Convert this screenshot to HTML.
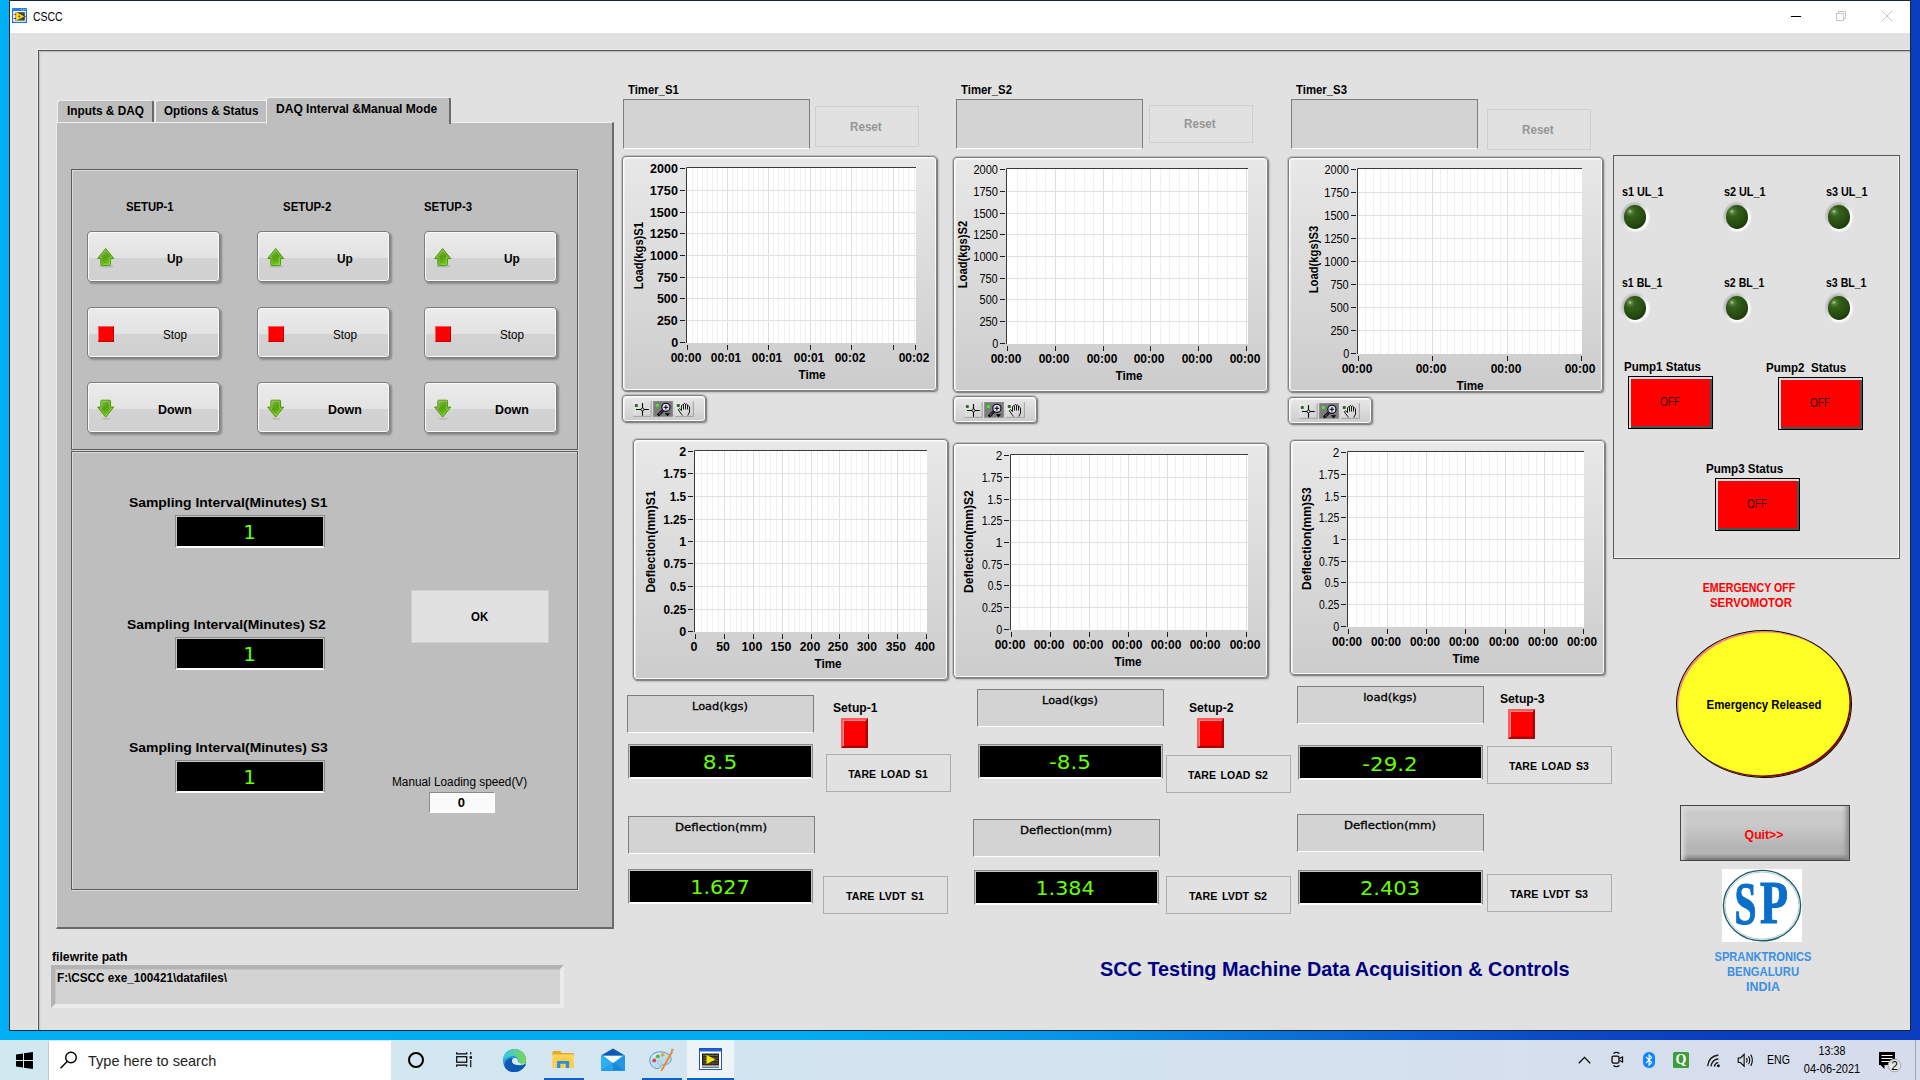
<!DOCTYPE html>
<html lang="en"><head><meta charset="utf-8"><title>CSCC</title>
<style>
html,body{margin:0;padding:0;width:1920px;height:1080px;overflow:hidden}
body{position:relative;background:linear-gradient(90deg,#00b0f7 0%,#00acf4 42%,#0596e8 55%,#0a6ed4 68%,#0a4cc6 80%,#0a3ec0 90%,#0a3cbe 100%);font-family:"Liberation Sans",sans-serif;font-size:13px;color:#000}
.a{position:absolute;box-sizing:border-box}
.t{margin:0;padding:0;white-space:pre}
.etch{border:1px solid #5c5c5c;box-shadow:1px 1px 0 #dadada,inset 1px 1px 0 #dadada}
.btn{border:1px solid #7c7c7c;border-radius:4px;background:linear-gradient(180deg,#ebebeb 0%,#e3e3e3 52%,#d3d3d3 54%,#d0d0d0 100%);box-shadow:inset 0 0 0 1px #fafafa,2px 2px 2px rgba(0,0,0,.28)}
.cf{border:1px solid #808080;border-radius:4px;background:linear-gradient(180deg,#e8e8e8 0%,#dcdcdc 45%,#cccccc 100%);box-shadow:inset 0 0 0 1px #fbfbfb,inset 2px 2px 0 0 rgba(251,251,251,.55),0 0 0 1px rgba(120,120,120,.35),1px 1px 1px rgba(0,0,0,.32),2px 2px 2px rgba(0,0,0,.12)}
.lbl{background:#d3d3d3;border:1px solid #7e7e7e;border-bottom-color:#fdfdfd}
.dsp{background:#000;border:1px solid #8a8a8a;border-bottom-color:#fff;box-shadow:inset 1px 1px 0 #c6c6c6,inset -1px 0 0 #c6c6c6,inset 0 -1px 0 #fff}
.flat{background:#e1e1e1;border:1px solid #adadad}
.flatd{background:#e1e1e1;border:1px solid #cfcfcf}
</style></head><body>

<div class="a" style="left:9px;top:0px;width:1902px;height:1031px;background:#1c2632"></div>
<div class="a" style="left:10px;top:1px;width:1900px;height:32px;background:#fff"></div>
<div class="a" style="left:10px;top:33px;width:1900px;height:997px;background:#e1e1e1"></div>
<div class="a" style="left:37px;top:49px;width:1873px;height:981px;border-left:1px solid #ebebeb;border-top:1px solid #ebebeb"></div>
<div class="a" style="left:38px;top:50px;width:1872px;height:980px;border-left:1px solid #565656;border-top:1px solid #565656;box-shadow:inset 1px 1px 0 #c4c4c4,inset 2px 2px 0 #d9d9d9"></div>
<svg class="a" style="left:12px;top:8px" width="15" height="15" viewBox="0 0 15 15">
<path d="M0 1.2Q0 0.2 1 0.2H14Q15 0.2 15 1.2V15H0Z" fill="#1572e4"/><rect x="0" y="0.2" width="15" height="2.6" fill="#1a80ee"/>
<circle cx="9.4" cy="1.6" r="0.65" fill="#f6d23c"/><circle cx="11.4" cy="1.6" r="0.65" fill="#f6d23c"/><circle cx="13.3" cy="1.6" r="0.65" fill="#f4a6a6"/>
<rect x="1.2" y="3" width="12.6" height="10.8" fill="#fff"/>
<rect x="3.2" y="4.2" width="9.6" height="8.4" fill="#3c3c3c"/>
<rect x="3.2" y="4.2" width="1.8" height="8.4" fill="#e6b414"/>
<polygon points="4.4,4.2 12.4,8.4 4.4,12.6" fill="#f8da14"/>
<path d="M7.3 7L8 8.4L7.3 9.8L6.6 8.4Z M5.9 8.4L7.3 7.9L8.7 8.4L7.3 8.9Z" fill="#2a2a2a"/>
<rect x="10" y="5" width="1.2" height="1.2" fill="#0a8a0a"/><rect x="8.6" y="11" width="1.2" height="1.2" fill="#0a8a0a"/>
<rect x="1.9" y="6" width="1.9" height="0.9" fill="#f00"/><rect x="11.9" y="8" width="1.9" height="0.9" fill="#f00"/><rect x="1.9" y="10" width="1.9" height="0.9" fill="#00f"/>
</svg>
<div class="a t" style="top:10.99px;font-size:12.5px;line-height:12.5px;font-weight:normal;color:#000;left:33.48px;transform-origin:0 50%;transform:scaleX(0.8380);">CSCC</div>
<div class="a" style="left:1791px;top:16px;width:10px;height:1px;background:#000"></div>
<svg class="a" style="left:1835px;top:10px" width="12" height="12" viewBox="0 0 12 12" fill="none" stroke="#c6c6c6" stroke-width="1">
<rect x="1.5" y="3.5" width="7" height="7"/><path d="M3.5 3.5V1.5H10.5V8.5H8.5"/></svg>
<svg class="a" style="left:1881px;top:10px" width="12" height="12" viewBox="0 0 12 12" stroke="#c4c4c4" stroke-width="1"><path d="M1 1L11 11M11 1L1 11"/></svg>
<div class="a" style="left:56px;top:122px;width:558px;height:807px;background:#bebebe;border-top:1px solid #eeeeee;border-left:1px solid #eeeeee;border-right:2px solid #6a6a6a;border-bottom:2px solid #6a6a6a"></div>
<div class="a" style="left:57px;top:100px;width:97px;height:22px;background:#bebebe;border-top:1px solid #eeeeee;border-left:1px solid #eeeeee;border-right:2px solid #6a6a6a;border-radius:3px 3px 0 0"></div>
<div class="a" style="left:155px;top:100px;width:112px;height:22px;background:#bebebe;border-top:1px solid #eeeeee;border-left:1px solid #eeeeee;border-right:2px solid #6a6a6a;border-radius:3px 3px 0 0;border-right:none"></div>
<div class="a" style="left:266px;top:97px;width:185px;height:27px;background:#bebebe;border-top:1px solid #eeeeee;border-left:1px solid #eeeeee;border-right:2px solid #6a6a6a;border-radius:3px 3px 0 0"></div>
<div class="a t" style="top:103.94px;font-size:13px;line-height:13px;font-weight:bold;color:#000;left:67.02px;transform-origin:0 50%;transform:scaleX(0.9117);">Inputs &amp; DAQ</div>
<div class="a t" style="top:103.94px;font-size:13px;line-height:13px;font-weight:bold;color:#000;left:163.95px;transform-origin:0 50%;transform:scaleX(0.8947);">Options &amp; Status</div>
<div class="a t" style="top:101.94px;font-size:13px;line-height:13px;font-weight:bold;color:#000;left:275.71px;transform-origin:0 50%;transform:scaleX(0.9260);">DAQ Interval &amp;Manual Mode</div>
<div class="a etch" style="left:71px;top:169px;width:507px;height:281px;"></div>
<div class="a etch" style="left:71px;top:451px;width:507px;height:439px;"></div>
<div class="a t" style="top:199.94px;font-size:13px;line-height:13px;font-weight:bold;color:#000;left:125.67px;transform-origin:0 50%;transform:scaleX(0.8667);">SETUP-1</div>
<div class="a t" style="top:199.94px;font-size:13px;line-height:13px;font-weight:bold;color:#000;left:282.66px;transform-origin:0 50%;transform:scaleX(0.8796);">SETUP-2</div>
<div class="a t" style="top:199.94px;font-size:13px;line-height:13px;font-weight:bold;color:#000;left:423.66px;transform-origin:0 50%;transform:scaleX(0.8741);">SETUP-3</div>
<div class="a btn" style="left:87px;top:231px;width:133px;height:51px"><svg class="a" style="left:7.75px;top:15.1px" width="19.4" height="20.6" viewBox="0 0 20 20.6" preserveAspectRatio="none"><defs><linearGradient id="g1" x1="0.2" y1="0" x2="0.8" y2="1"><stop offset="0" stop-color="#86bf4a"/><stop offset="0.5" stop-color="#57a10e"/><stop offset="1" stop-color="#74d616"/></linearGradient></defs><ellipse cx="10.5" cy="19.4" rx="7.5" ry="1.1" fill="rgba(0,0,0,.13)"/><path d="M10 1.5L18.3 11.5H15V17.5Q15 18.4 14.1 18.4H5.9Q5 18.4 5 17.5V11.5H1.7Z" fill="url(#g1)" stroke="#4e9a06" stroke-width="1" stroke-linejoin="round"/><path d="M10 3.1L16 10.4H13.9V17.3H6.1V10.4H4Z" fill="none" stroke="rgba(255,255,255,.28)" stroke-width="0.9"/></svg></div>
<div class="a t" style="top:251.94px;font-size:13px;line-height:13px;font-weight:bold;color:#000;left:167.02px;transform-origin:0 50%;transform:scaleX(0.9125);">Up</div>
<div class="a btn" style="left:87px;top:307px;width:133px;height:51px"><div class="a" style="left:10px;top:18px;width:16px;height:16px;background:#ff0000;border:1px solid;border-color:#ff5a5a #c40000 #c40000 #ff5a5a"></div></div>
<div class="a t" style="top:327.94px;font-size:13px;line-height:13px;font-weight:normal;color:#000;left:162.73px;transform-origin:0 50%;transform:scaleX(0.8980);">Stop</div>
<div class="a btn" style="left:87px;top:382px;width:133px;height:51px"><svg class="a" style="left:7.75px;top:16.2px" width="19.4" height="20.6" viewBox="0 0 20 20.6" preserveAspectRatio="none"><defs><linearGradient id="g3" x1="0.2" y1="0" x2="0.8" y2="1"><stop offset="0" stop-color="#86bf4a"/><stop offset="0.45" stop-color="#57a10e"/><stop offset="1" stop-color="#74d616"/></linearGradient></defs><ellipse cx="10.5" cy="19.8" rx="5" ry="0.8" fill="rgba(0,0,0,.13)"/><path d="M10 18.1L18.3 8.1H15V2.1Q15 1.2 14.1 1.2H5.9Q5 1.2 5 2.1V8.1H1.7Z" fill="url(#g3)" stroke="#4e9a06" stroke-width="1" stroke-linejoin="round"/><path d="M10 16.5L16 9.2H13.9V2.3H6.1V9.2H4Z" fill="none" stroke="rgba(255,255,255,.28)" stroke-width="0.9"/></svg></div>
<div class="a t" style="top:402.94px;font-size:13px;line-height:13px;font-weight:bold;color:#000;left:157.68px;transform-origin:0 50%;transform:scaleX(0.9541);">Down</div>
<div class="a btn" style="left:257px;top:231px;width:133px;height:51px"><svg class="a" style="left:7.75px;top:15.1px" width="19.4" height="20.6" viewBox="0 0 20 20.6" preserveAspectRatio="none"><defs><linearGradient id="g4" x1="0.2" y1="0" x2="0.8" y2="1"><stop offset="0" stop-color="#86bf4a"/><stop offset="0.5" stop-color="#57a10e"/><stop offset="1" stop-color="#74d616"/></linearGradient></defs><ellipse cx="10.5" cy="19.4" rx="7.5" ry="1.1" fill="rgba(0,0,0,.13)"/><path d="M10 1.5L18.3 11.5H15V17.5Q15 18.4 14.1 18.4H5.9Q5 18.4 5 17.5V11.5H1.7Z" fill="url(#g4)" stroke="#4e9a06" stroke-width="1" stroke-linejoin="round"/><path d="M10 3.1L16 10.4H13.9V17.3H6.1V10.4H4Z" fill="none" stroke="rgba(255,255,255,.28)" stroke-width="0.9"/></svg></div>
<div class="a t" style="top:251.94px;font-size:13px;line-height:13px;font-weight:bold;color:#000;left:337.02px;transform-origin:0 50%;transform:scaleX(0.9125);">Up</div>
<div class="a btn" style="left:257px;top:307px;width:133px;height:51px"><div class="a" style="left:10px;top:18px;width:16px;height:16px;background:#ff0000;border:1px solid;border-color:#ff5a5a #c40000 #c40000 #ff5a5a"></div></div>
<div class="a t" style="top:327.94px;font-size:13px;line-height:13px;font-weight:normal;color:#000;left:332.73px;transform-origin:0 50%;transform:scaleX(0.8980);">Stop</div>
<div class="a btn" style="left:257px;top:382px;width:133px;height:51px"><svg class="a" style="left:7.75px;top:16.2px" width="19.4" height="20.6" viewBox="0 0 20 20.6" preserveAspectRatio="none"><defs><linearGradient id="g6" x1="0.2" y1="0" x2="0.8" y2="1"><stop offset="0" stop-color="#86bf4a"/><stop offset="0.45" stop-color="#57a10e"/><stop offset="1" stop-color="#74d616"/></linearGradient></defs><ellipse cx="10.5" cy="19.8" rx="5" ry="0.8" fill="rgba(0,0,0,.13)"/><path d="M10 18.1L18.3 8.1H15V2.1Q15 1.2 14.1 1.2H5.9Q5 1.2 5 2.1V8.1H1.7Z" fill="url(#g6)" stroke="#4e9a06" stroke-width="1" stroke-linejoin="round"/><path d="M10 16.5L16 9.2H13.9V2.3H6.1V9.2H4Z" fill="none" stroke="rgba(255,255,255,.28)" stroke-width="0.9"/></svg></div>
<div class="a t" style="top:402.94px;font-size:13px;line-height:13px;font-weight:bold;color:#000;left:327.68px;transform-origin:0 50%;transform:scaleX(0.9541);">Down</div>
<div class="a btn" style="left:424px;top:231px;width:133px;height:51px"><svg class="a" style="left:7.75px;top:15.1px" width="19.4" height="20.6" viewBox="0 0 20 20.6" preserveAspectRatio="none"><defs><linearGradient id="g7" x1="0.2" y1="0" x2="0.8" y2="1"><stop offset="0" stop-color="#86bf4a"/><stop offset="0.5" stop-color="#57a10e"/><stop offset="1" stop-color="#74d616"/></linearGradient></defs><ellipse cx="10.5" cy="19.4" rx="7.5" ry="1.1" fill="rgba(0,0,0,.13)"/><path d="M10 1.5L18.3 11.5H15V17.5Q15 18.4 14.1 18.4H5.9Q5 18.4 5 17.5V11.5H1.7Z" fill="url(#g7)" stroke="#4e9a06" stroke-width="1" stroke-linejoin="round"/><path d="M10 3.1L16 10.4H13.9V17.3H6.1V10.4H4Z" fill="none" stroke="rgba(255,255,255,.28)" stroke-width="0.9"/></svg></div>
<div class="a t" style="top:251.94px;font-size:13px;line-height:13px;font-weight:bold;color:#000;left:504.02px;transform-origin:0 50%;transform:scaleX(0.9125);">Up</div>
<div class="a btn" style="left:424px;top:307px;width:133px;height:51px"><div class="a" style="left:10px;top:18px;width:16px;height:16px;background:#ff0000;border:1px solid;border-color:#ff5a5a #c40000 #c40000 #ff5a5a"></div></div>
<div class="a t" style="top:327.94px;font-size:13px;line-height:13px;font-weight:normal;color:#000;left:499.73px;transform-origin:0 50%;transform:scaleX(0.8980);">Stop</div>
<div class="a btn" style="left:424px;top:382px;width:133px;height:51px"><svg class="a" style="left:7.75px;top:16.2px" width="19.4" height="20.6" viewBox="0 0 20 20.6" preserveAspectRatio="none"><defs><linearGradient id="g9" x1="0.2" y1="0" x2="0.8" y2="1"><stop offset="0" stop-color="#86bf4a"/><stop offset="0.45" stop-color="#57a10e"/><stop offset="1" stop-color="#74d616"/></linearGradient></defs><ellipse cx="10.5" cy="19.8" rx="5" ry="0.8" fill="rgba(0,0,0,.13)"/><path d="M10 18.1L18.3 8.1H15V2.1Q15 1.2 14.1 1.2H5.9Q5 1.2 5 2.1V8.1H1.7Z" fill="url(#g9)" stroke="#4e9a06" stroke-width="1" stroke-linejoin="round"/><path d="M10 16.5L16 9.2H13.9V2.3H6.1V9.2H4Z" fill="none" stroke="rgba(255,255,255,.28)" stroke-width="0.9"/></svg></div>
<div class="a t" style="top:402.94px;font-size:13px;line-height:13px;font-weight:bold;color:#000;left:494.68px;transform-origin:0 50%;transform:scaleX(0.9541);">Down</div>
<div class="a t" style="top:496.18px;font-size:13.5px;line-height:13.5px;font-weight:bold;color:#000;left:128.89px;transform-origin:0 50%;transform:scaleX(1.0297);">Sampling Interval(Minutes) S1</div>
<div class="a dsp" style="left:175px;top:515px;width:150px;height:33px;"></div>
<div class="a t" style="top:521.60px;font-size:20px;line-height:20px;font-weight:normal;color:#66ff00;font-family:&quot;DejaVu Sans&quot;,sans-serif;left:249.54px;transform:translateX(-50%) scaleX(1.0000);">1</div>
<div class="a t" style="top:618.18px;font-size:13.5px;line-height:13.5px;font-weight:bold;color:#000;left:126.88px;transform-origin:0 50%;transform:scaleX(1.0310);">Sampling Interval(Minutes) S2</div>
<div class="a dsp" style="left:175px;top:637px;width:150px;height:33px;"></div>
<div class="a t" style="top:643.60px;font-size:20px;line-height:20px;font-weight:normal;color:#66ff00;font-family:&quot;DejaVu Sans&quot;,sans-serif;left:249.54px;transform:translateX(-50%) scaleX(1.0000);">1</div>
<div class="a t" style="top:741.18px;font-size:13.5px;line-height:13.5px;font-weight:bold;color:#000;left:128.88px;transform-origin:0 50%;transform:scaleX(1.0310);">Sampling Interval(Minutes) S3</div>
<div class="a dsp" style="left:175px;top:760px;width:150px;height:33px;"></div>
<div class="a t" style="top:766.60px;font-size:20px;line-height:20px;font-weight:normal;color:#66ff00;font-family:&quot;DejaVu Sans&quot;,sans-serif;left:249.54px;transform:translateX(-50%) scaleX(1.0000);">1</div>
<div class="a" style="left:411px;top:590px;width:138px;height:53px;background:#e1e1e1;border:1px solid #d0d0d0"></div>
<div class="a t" style="top:609.93px;font-size:13px;line-height:13px;font-weight:bold;color:#000;left:470.96px;transform-origin:0 50%;transform:scaleX(0.8800);">OK</div>
<div class="a t" style="top:775.69px;font-size:12.5px;line-height:12.5px;font-weight:normal;color:#000;left:391.76px;transform-origin:0 50%;transform:scaleX(0.9442);">Manual Loading speed(V)</div>
<div class="a" style="left:429px;top:792px;width:66px;height:21px;background:#fafafa;border:1px solid;border-color:#8a8a8a #fff #fff #8a8a8a"></div>
<div class="a t" style="top:795.93px;font-size:13px;line-height:13px;font-weight:bold;color:#000;left:461.29px;transform:translateX(-50%) scaleX(1.0000);">0</div>
<div class="a t" style="top:949.73px;font-size:13px;line-height:13px;font-weight:bold;color:#000;left:52.46px;transform-origin:0 50%;transform:scaleX(0.9413);">filewrite path</div>
<div class="a" style="left:51px;top:965px;width:513px;height:43px;background:#d3d3d3;border:4px solid;border-color:#b4b4b4 #ececec #ececec #b4b4b4;box-shadow:inset 1px 1px 0 #c6c6c6"></div>
<div class="a t" style="top:971.03px;font-size:13px;line-height:13px;font-weight:bold;color:#000;left:57.02px;transform-origin:0 50%;transform:scaleX(0.9012);">F:\CSCC exe_100421\datafiles\</div>
<div class="a t" style="top:82.94px;font-size:13px;line-height:13px;font-weight:bold;color:#000;left:627.70px;transform-origin:0 50%;transform:scaleX(0.8707);">Timer_S1</div>
<div class="a lbl" style="left:623px;top:99px;width:187px;height:50px;"></div>
<div class="a flatd" style="left:815px;top:106px;width:104px;height:41px;"></div>
<div class="a t" style="top:119.94px;font-size:13px;line-height:13px;font-weight:bold;color:#969696;left:850.13px;transform-origin:0 50%;transform:scaleX(0.8957);">Reset</div>
<div class="a t" style="top:82.94px;font-size:13px;line-height:13px;font-weight:bold;color:#000;left:960.60px;transform-origin:0 50%;transform:scaleX(0.8745);">Timer_S2</div>
<div class="a lbl" style="left:956px;top:99px;width:187px;height:50px;"></div>
<div class="a flatd" style="left:1149px;top:105px;width:104px;height:38px;"></div>
<div class="a t" style="top:117.44px;font-size:13px;line-height:13px;font-weight:bold;color:#969696;left:1184.13px;transform-origin:0 50%;transform:scaleX(0.8957);">Reset</div>
<div class="a t" style="top:82.94px;font-size:13px;line-height:13px;font-weight:bold;color:#000;left:1295.60px;transform-origin:0 50%;transform:scaleX(0.8745);">Timer_S3</div>
<div class="a lbl" style="left:1291px;top:99px;width:187px;height:50px;"></div>
<div class="a flatd" style="left:1487px;top:109px;width:104px;height:41px;"></div>
<div class="a t" style="top:122.94px;font-size:13px;line-height:13px;font-weight:bold;color:#969696;left:1522.23px;transform-origin:0 50%;transform:scaleX(0.8957);">Reset</div>
<div class="a cf" style="left:622px;top:156px;width:315px;height:235px;"></div>
<svg class="a" style="left:686px;top:167px" width="230" height="176" viewBox="0 0 230 176"><rect x="0" y="0" width="230" height="176" fill="#fff"/><path d="M6.5 0V176" stroke="#f0f0f0"/><path d="M11.5 0V176" stroke="#f0f0f0"/><path d="M16.5 0V176" stroke="#f0f0f0"/><path d="M21.5 0V176" stroke="#f0f0f0"/><path d="M26.5 0V176" stroke="#f0f0f0"/><path d="M31.5 0V176" stroke="#f0f0f0"/><path d="M36.5 0V176" stroke="#f0f0f0"/><path d="M46.5 0V176" stroke="#f0f0f0"/><path d="M51.5 0V176" stroke="#f0f0f0"/><path d="M56.5 0V176" stroke="#f0f0f0"/><path d="M62.5 0V176" stroke="#f0f0f0"/><path d="M67.5 0V176" stroke="#f0f0f0"/><path d="M72.5 0V176" stroke="#f0f0f0"/><path d="M77.5 0V176" stroke="#f0f0f0"/><path d="M87.5 0V176" stroke="#f0f0f0"/><path d="M92.5 0V176" stroke="#f0f0f0"/><path d="M98.5 0V176" stroke="#f0f0f0"/><path d="M103.5 0V176" stroke="#f0f0f0"/><path d="M108.5 0V176" stroke="#f0f0f0"/><path d="M114.5 0V176" stroke="#f0f0f0"/><path d="M119.5 0V176" stroke="#f0f0f0"/><path d="M129.5 0V176" stroke="#f0f0f0"/><path d="M134.5 0V176" stroke="#f0f0f0"/><path d="M139.5 0V176" stroke="#f0f0f0"/><path d="M144.5 0V176" stroke="#f0f0f0"/><path d="M150.5 0V176" stroke="#f0f0f0"/><path d="M155.5 0V176" stroke="#f0f0f0"/><path d="M160.5 0V176" stroke="#f0f0f0"/><path d="M170.5 0V176" stroke="#f0f0f0"/><path d="M176.5 0V176" stroke="#f0f0f0"/><path d="M181.5 0V176" stroke="#f0f0f0"/><path d="M186.5 0V176" stroke="#f0f0f0"/><path d="M191.5 0V176" stroke="#f0f0f0"/><path d="M196.5 0V176" stroke="#f0f0f0"/><path d="M202.5 0V176" stroke="#f0f0f0"/><path d="M212.5 0V176" stroke="#f0f0f0"/><path d="M217.5 0V176" stroke="#f0f0f0"/><path d="M222.5 0V176" stroke="#f0f0f0"/><path d="M228.5 0V176" stroke="#f0f0f0"/><path d="M41.5 0V176" stroke="#dedede"/><path d="M82.5 0V176" stroke="#dedede"/><path d="M124.5 0V176" stroke="#dedede"/><path d="M165.5 0V176" stroke="#dedede"/><path d="M207.5 0V176" stroke="#dedede"/><path d="M0 23.5H230" stroke="#e0e0e0"/><path d="M0 45.5H230" stroke="#e0e0e0"/><path d="M0 66.5H230" stroke="#e0e0e0"/><path d="M0 88.5H230" stroke="#e0e0e0"/><path d="M0 110.5H230" stroke="#e0e0e0"/><path d="M0 131.5H230" stroke="#e0e0e0"/><path d="M0 153.5H230" stroke="#e0e0e0"/><path d="M0.5 176V0.5H230" fill="none" stroke="#3a3a3a"/></svg>
<div class="a" style="left:680px;top:168px;width:5px;height:1px;background:#1a1a1a"></div>
<div class="a t" style="top:161.94px;font-size:13px;line-height:13px;font-weight:bold;color:#000;right:1241.99px;transform-origin:100% 50%;transform:scaleX(0.9643);">2000</div>
<div class="a" style="left:680px;top:190px;width:5px;height:1px;background:#1a1a1a"></div>
<div class="a t" style="top:183.94px;font-size:13px;line-height:13px;font-weight:bold;color:#000;right:1241.99px;transform-origin:100% 50%;transform:scaleX(0.9730);">1750</div>
<div class="a" style="left:680px;top:212px;width:5px;height:1px;background:#1a1a1a"></div>
<div class="a t" style="top:205.94px;font-size:13px;line-height:13px;font-weight:bold;color:#000;right:1241.99px;transform-origin:100% 50%;transform:scaleX(0.9730);">1500</div>
<div class="a" style="left:680px;top:233px;width:5px;height:1px;background:#1a1a1a"></div>
<div class="a t" style="top:226.94px;font-size:13px;line-height:13px;font-weight:bold;color:#000;right:1241.99px;transform-origin:100% 50%;transform:scaleX(0.9730);">1250</div>
<div class="a" style="left:680px;top:255px;width:5px;height:1px;background:#1a1a1a"></div>
<div class="a t" style="top:248.94px;font-size:13px;line-height:13px;font-weight:bold;color:#000;right:1241.99px;transform-origin:100% 50%;transform:scaleX(0.9730);">1000</div>
<div class="a" style="left:680px;top:277px;width:5px;height:1px;background:#1a1a1a"></div>
<div class="a t" style="top:270.94px;font-size:13px;line-height:13px;font-weight:bold;color:#000;right:1241.97px;transform-origin:100% 50%;transform:scaleX(0.9590);">750</div>
<div class="a" style="left:680px;top:298px;width:5px;height:1px;background:#1a1a1a"></div>
<div class="a t" style="top:291.94px;font-size:13px;line-height:13px;font-weight:bold;color:#000;right:1241.97px;transform-origin:100% 50%;transform:scaleX(0.9590);">500</div>
<div class="a" style="left:680px;top:320px;width:5px;height:1px;background:#1a1a1a"></div>
<div class="a t" style="top:313.94px;font-size:13px;line-height:13px;font-weight:bold;color:#000;right:1241.97px;transform-origin:100% 50%;transform:scaleX(0.9590);">250</div>
<div class="a" style="left:680px;top:342px;width:5px;height:1px;background:#1a1a1a"></div>
<div class="a t" style="top:335.94px;font-size:13px;line-height:13px;font-weight:bold;color:#000;right:1241.94px;transform-origin:100% 50%;transform:scaleX(0.9600);">0</div>
<div class="a" style="left:687px;top:345px;width:1px;height:5px;background:#1a1a1a"></div>
<div class="a t" style="top:350.94px;font-size:13px;line-height:13px;font-weight:bold;color:#000;left:686.40px;transform:translateX(-50%) scaleX(0.9240);">00:00</div>
<div class="a" style="left:727px;top:345px;width:1px;height:5px;background:#1a1a1a"></div>
<div class="a t" style="top:350.94px;font-size:13px;line-height:13px;font-weight:bold;color:#000;left:726.29px;transform:translateX(-50%) scaleX(0.9169);">00:01</div>
<div class="a" style="left:768px;top:345px;width:1px;height:5px;background:#1a1a1a"></div>
<div class="a t" style="top:350.94px;font-size:13px;line-height:13px;font-weight:bold;color:#000;left:767.29px;transform:translateX(-50%) scaleX(0.9169);">00:01</div>
<div class="a" style="left:810px;top:345px;width:1px;height:5px;background:#1a1a1a"></div>
<div class="a t" style="top:350.94px;font-size:13px;line-height:13px;font-weight:bold;color:#000;left:809.29px;transform:translateX(-50%) scaleX(0.9169);">00:01</div>
<div class="a" style="left:851px;top:345px;width:1px;height:5px;background:#1a1a1a"></div>
<div class="a t" style="top:350.94px;font-size:13px;line-height:13px;font-weight:bold;color:#000;left:850.40px;transform:translateX(-50%) scaleX(0.9240);">00:02</div>
<div class="a" style="left:893px;top:345px;width:1px;height:5px;background:#1a1a1a"></div>
<div class="a" style="left:915px;top:345px;width:1px;height:5px;background:#1a1a1a"></div>
<div class="a t" style="top:350.94px;font-size:13px;line-height:13px;font-weight:bold;color:#000;left:914.40px;transform:translateX(-50%) scaleX(0.9240);">00:02</div>
<div class="a t" style="top:367.94px;font-size:13px;line-height:13px;font-weight:bold;color:#000;left:812.16px;transform:translateX(-50%) scaleX(0.9008);">Time</div>
<div class="a t" style="left:639px;top:249.44px;font-size:13px;line-height:13px;font-weight:bold;transform:translateX(-50%) rotate(-90deg) scaleX(0.8610);transform-origin:50% 50.5%">Load(kgs)S1</div>
<div class="a cf" style="left:953px;top:157px;width:315px;height:235px;"></div>
<svg class="a" style="left:1006px;top:168px" width="242" height="176" viewBox="0 0 242 176"><rect x="0" y="0" width="242" height="176" fill="#fff"/><path d="M11.5 0V176" stroke="#f0f0f0"/><path d="M20.5 0V176" stroke="#f0f0f0"/><path d="M30.5 0V176" stroke="#f0f0f0"/><path d="M39.5 0V176" stroke="#f0f0f0"/><path d="M59.5 0V176" stroke="#f0f0f0"/><path d="M68.5 0V176" stroke="#f0f0f0"/><path d="M78.5 0V176" stroke="#f0f0f0"/><path d="M87.5 0V176" stroke="#f0f0f0"/><path d="M106.5 0V176" stroke="#f0f0f0"/><path d="M116.5 0V176" stroke="#f0f0f0"/><path d="M125.5 0V176" stroke="#f0f0f0"/><path d="M135.5 0V176" stroke="#f0f0f0"/><path d="M154.5 0V176" stroke="#f0f0f0"/><path d="M163.5 0V176" stroke="#f0f0f0"/><path d="M173.5 0V176" stroke="#f0f0f0"/><path d="M182.5 0V176" stroke="#f0f0f0"/><path d="M202.5 0V176" stroke="#f0f0f0"/><path d="M211.5 0V176" stroke="#f0f0f0"/><path d="M221.5 0V176" stroke="#f0f0f0"/><path d="M230.5 0V176" stroke="#f0f0f0"/><path d="M49.5 0V176" stroke="#dedede"/><path d="M97.5 0V176" stroke="#dedede"/><path d="M144.5 0V176" stroke="#dedede"/><path d="M192.5 0V176" stroke="#dedede"/><path d="M240.5 0V176" stroke="#dedede"/><path d="M0 23.5H242" stroke="#e0e0e0"/><path d="M0 45.5H242" stroke="#e0e0e0"/><path d="M0 66.5H242" stroke="#e0e0e0"/><path d="M0 88.5H242" stroke="#e0e0e0"/><path d="M0 110.5H242" stroke="#e0e0e0"/><path d="M0 131.5H242" stroke="#e0e0e0"/><path d="M0 153.5H242" stroke="#e0e0e0"/><path d="M0.5 176V0.5H242" fill="none" stroke="#3a3a3a"/></svg>
<div class="a" style="left:1000px;top:169px;width:5px;height:1px;background:#1a1a1a"></div>
<div class="a t" style="top:162.94px;font-size:13px;line-height:13px;font-weight:normal;color:#000;right:922.04px;transform-origin:100% 50%;transform:scaleX(0.8468);">2000</div>
<div class="a" style="left:1000px;top:191px;width:5px;height:1px;background:#1a1a1a"></div>
<div class="a t" style="top:184.94px;font-size:13px;line-height:13px;font-weight:normal;color:#000;right:922.04px;transform-origin:100% 50%;transform:scaleX(0.8545);">1750</div>
<div class="a" style="left:1000px;top:213px;width:5px;height:1px;background:#1a1a1a"></div>
<div class="a t" style="top:206.94px;font-size:13px;line-height:13px;font-weight:normal;color:#000;right:922.04px;transform-origin:100% 50%;transform:scaleX(0.8545);">1500</div>
<div class="a" style="left:1000px;top:234px;width:5px;height:1px;background:#1a1a1a"></div>
<div class="a t" style="top:227.94px;font-size:13px;line-height:13px;font-weight:normal;color:#000;right:922.04px;transform-origin:100% 50%;transform:scaleX(0.8545);">1250</div>
<div class="a" style="left:1000px;top:256px;width:5px;height:1px;background:#1a1a1a"></div>
<div class="a t" style="top:249.94px;font-size:13px;line-height:13px;font-weight:normal;color:#000;right:922.04px;transform-origin:100% 50%;transform:scaleX(0.8545);">1000</div>
<div class="a" style="left:1000px;top:278px;width:5px;height:1px;background:#1a1a1a"></div>
<div class="a t" style="top:271.94px;font-size:13px;line-height:13px;font-weight:normal;color:#000;right:922.02px;transform-origin:100% 50%;transform:scaleX(0.8439);">750</div>
<div class="a" style="left:1000px;top:299px;width:5px;height:1px;background:#1a1a1a"></div>
<div class="a t" style="top:292.94px;font-size:13px;line-height:13px;font-weight:normal;color:#000;right:922.02px;transform-origin:100% 50%;transform:scaleX(0.8337);">500</div>
<div class="a" style="left:1000px;top:321px;width:5px;height:1px;background:#1a1a1a"></div>
<div class="a t" style="top:314.94px;font-size:13px;line-height:13px;font-weight:normal;color:#000;right:922.02px;transform-origin:100% 50%;transform:scaleX(0.8439);">250</div>
<div class="a" style="left:1000px;top:343px;width:5px;height:1px;background:#1a1a1a"></div>
<div class="a t" style="top:336.94px;font-size:13px;line-height:13px;font-weight:normal;color:#000;right:922.00px;transform-origin:100% 50%;transform:scaleX(0.8320);">0</div>
<div class="a" style="left:1007px;top:346px;width:1px;height:5px;background:#1a1a1a"></div>
<div class="a t" style="top:351.83px;font-size:13px;line-height:13px;font-weight:bold;color:#000;left:1006.40px;transform:translateX(-50%) scaleX(0.9240);">00:00</div>
<div class="a" style="left:1055px;top:346px;width:1px;height:5px;background:#1a1a1a"></div>
<div class="a t" style="top:351.83px;font-size:13px;line-height:13px;font-weight:bold;color:#000;left:1054.40px;transform:translateX(-50%) scaleX(0.9240);">00:00</div>
<div class="a" style="left:1103px;top:346px;width:1px;height:5px;background:#1a1a1a"></div>
<div class="a t" style="top:351.83px;font-size:13px;line-height:13px;font-weight:bold;color:#000;left:1102.40px;transform:translateX(-50%) scaleX(0.9240);">00:00</div>
<div class="a" style="left:1150px;top:346px;width:1px;height:5px;background:#1a1a1a"></div>
<div class="a t" style="top:351.83px;font-size:13px;line-height:13px;font-weight:bold;color:#000;left:1149.40px;transform:translateX(-50%) scaleX(0.9240);">00:00</div>
<div class="a" style="left:1198px;top:346px;width:1px;height:5px;background:#1a1a1a"></div>
<div class="a t" style="top:351.83px;font-size:13px;line-height:13px;font-weight:bold;color:#000;left:1197.40px;transform:translateX(-50%) scaleX(0.9240);">00:00</div>
<div class="a" style="left:1246px;top:346px;width:1px;height:5px;background:#1a1a1a"></div>
<div class="a t" style="top:351.83px;font-size:13px;line-height:13px;font-weight:bold;color:#000;left:1245.40px;transform:translateX(-50%) scaleX(0.9240);">00:00</div>
<div class="a t" style="top:368.94px;font-size:13px;line-height:13px;font-weight:bold;color:#000;left:1128.56px;transform:translateX(-50%) scaleX(0.9008);">Time</div>
<div class="a t" style="left:963px;top:248.44px;font-size:13px;line-height:13px;font-weight:bold;transform:translateX(-50%) rotate(-90deg) scaleX(0.8638);transform-origin:50% 50.5%">Load(kgs)S2</div>
<div class="a cf" style="left:1288px;top:157px;width:315px;height:235px;"></div>
<svg class="a" style="left:1357px;top:168px" width="225" height="186" viewBox="0 0 225 186"><rect x="0" y="0" width="225" height="186" fill="#fff"/><path d="M8.5 0V186" stroke="#f0f0f0"/><path d="M16.5 0V186" stroke="#f0f0f0"/><path d="M23.5 0V186" stroke="#f0f0f0"/><path d="M31.5 0V186" stroke="#f0f0f0"/><path d="M38.5 0V186" stroke="#f0f0f0"/><path d="M45.5 0V186" stroke="#f0f0f0"/><path d="M53.5 0V186" stroke="#f0f0f0"/><path d="M60.5 0V186" stroke="#f0f0f0"/><path d="M68.5 0V186" stroke="#f0f0f0"/><path d="M83.5 0V186" stroke="#f0f0f0"/><path d="M90.5 0V186" stroke="#f0f0f0"/><path d="M97.5 0V186" stroke="#f0f0f0"/><path d="M105.5 0V186" stroke="#f0f0f0"/><path d="M113.5 0V186" stroke="#f0f0f0"/><path d="M120.5 0V186" stroke="#f0f0f0"/><path d="M127.5 0V186" stroke="#f0f0f0"/><path d="M135.5 0V186" stroke="#f0f0f0"/><path d="M143.5 0V186" stroke="#f0f0f0"/><path d="M157.5 0V186" stroke="#f0f0f0"/><path d="M165.5 0V186" stroke="#f0f0f0"/><path d="M172.5 0V186" stroke="#f0f0f0"/><path d="M180.5 0V186" stroke="#f0f0f0"/><path d="M187.5 0V186" stroke="#f0f0f0"/><path d="M194.5 0V186" stroke="#f0f0f0"/><path d="M202.5 0V186" stroke="#f0f0f0"/><path d="M209.5 0V186" stroke="#f0f0f0"/><path d="M217.5 0V186" stroke="#f0f0f0"/><path d="M75.5 0V186" stroke="#dedede"/><path d="M150.5 0V186" stroke="#dedede"/><path d="M0 24.5H225" stroke="#e0e0e0"/><path d="M0 47.5H225" stroke="#e0e0e0"/><path d="M0 70.5H225" stroke="#e0e0e0"/><path d="M0 93.5H225" stroke="#e0e0e0"/><path d="M0 116.5H225" stroke="#e0e0e0"/><path d="M0 139.5H225" stroke="#e0e0e0"/><path d="M0 162.5H225" stroke="#e0e0e0"/><path d="M0.5 186V0.5H225" fill="none" stroke="#3a3a3a"/></svg>
<div class="a" style="left:1351px;top:169px;width:5px;height:1px;background:#1a1a1a"></div>
<div class="a t" style="top:162.94px;font-size:13px;line-height:13px;font-weight:normal;color:#000;right:571.04px;transform-origin:100% 50%;transform:scaleX(0.8468);">2000</div>
<div class="a" style="left:1351px;top:192px;width:5px;height:1px;background:#1a1a1a"></div>
<div class="a t" style="top:185.94px;font-size:13px;line-height:13px;font-weight:normal;color:#000;right:571.04px;transform-origin:100% 50%;transform:scaleX(0.8545);">1750</div>
<div class="a" style="left:1351px;top:215px;width:5px;height:1px;background:#1a1a1a"></div>
<div class="a t" style="top:208.94px;font-size:13px;line-height:13px;font-weight:normal;color:#000;right:571.04px;transform-origin:100% 50%;transform:scaleX(0.8545);">1500</div>
<div class="a" style="left:1351px;top:238px;width:5px;height:1px;background:#1a1a1a"></div>
<div class="a t" style="top:231.94px;font-size:13px;line-height:13px;font-weight:normal;color:#000;right:571.04px;transform-origin:100% 50%;transform:scaleX(0.8545);">1250</div>
<div class="a" style="left:1351px;top:261px;width:5px;height:1px;background:#1a1a1a"></div>
<div class="a t" style="top:254.94px;font-size:13px;line-height:13px;font-weight:normal;color:#000;right:571.04px;transform-origin:100% 50%;transform:scaleX(0.8545);">1000</div>
<div class="a" style="left:1351px;top:284px;width:5px;height:1px;background:#1a1a1a"></div>
<div class="a t" style="top:277.94px;font-size:13px;line-height:13px;font-weight:normal;color:#000;right:571.02px;transform-origin:100% 50%;transform:scaleX(0.8439);">750</div>
<div class="a" style="left:1351px;top:307px;width:5px;height:1px;background:#1a1a1a"></div>
<div class="a t" style="top:300.94px;font-size:13px;line-height:13px;font-weight:normal;color:#000;right:571.02px;transform-origin:100% 50%;transform:scaleX(0.8337);">500</div>
<div class="a" style="left:1351px;top:330px;width:5px;height:1px;background:#1a1a1a"></div>
<div class="a t" style="top:323.94px;font-size:13px;line-height:13px;font-weight:normal;color:#000;right:571.02px;transform-origin:100% 50%;transform:scaleX(0.8439);">250</div>
<div class="a" style="left:1351px;top:353px;width:5px;height:1px;background:#1a1a1a"></div>
<div class="a t" style="top:346.94px;font-size:13px;line-height:13px;font-weight:normal;color:#000;right:571.00px;transform-origin:100% 50%;transform:scaleX(0.8320);">0</div>
<div class="a" style="left:1358px;top:356px;width:1px;height:5px;background:#1a1a1a"></div>
<div class="a t" style="top:361.83px;font-size:13px;line-height:13px;font-weight:bold;color:#000;left:1357.40px;transform:translateX(-50%) scaleX(0.9240);">00:00</div>
<div class="a" style="left:1432px;top:356px;width:1px;height:5px;background:#1a1a1a"></div>
<div class="a t" style="top:361.83px;font-size:13px;line-height:13px;font-weight:bold;color:#000;left:1431.40px;transform:translateX(-50%) scaleX(0.9240);">00:00</div>
<div class="a" style="left:1507px;top:356px;width:1px;height:5px;background:#1a1a1a"></div>
<div class="a t" style="top:361.83px;font-size:13px;line-height:13px;font-weight:bold;color:#000;left:1506.40px;transform:translateX(-50%) scaleX(0.9240);">00:00</div>
<div class="a" style="left:1581px;top:356px;width:1px;height:5px;background:#1a1a1a"></div>
<div class="a t" style="top:361.83px;font-size:13px;line-height:13px;font-weight:bold;color:#000;left:1580.40px;transform:translateX(-50%) scaleX(0.9240);">00:00</div>
<div class="a t" style="top:378.83px;font-size:13px;line-height:13px;font-weight:bold;color:#000;left:1470.16px;transform:translateX(-50%) scaleX(0.9008);">Time</div>
<div class="a t" style="left:1313.5px;top:253.44px;font-size:13px;line-height:13px;font-weight:bold;transform:translateX(-50%) rotate(-90deg) scaleX(0.8638);transform-origin:50% 50.5%">Load(kgs)S3</div>
<div class="a cf" style="left:633px;top:439px;width:315px;height:241px;"></div>
<svg class="a" style="left:694px;top:450px" width="233" height="182" viewBox="0 0 233 182"><rect x="0" y="0" width="233" height="182" fill="#fff"/><path d="M7.5 0V182" stroke="#f0f0f0"/><path d="M13.5 0V182" stroke="#f0f0f0"/><path d="M18.5 0V182" stroke="#f0f0f0"/><path d="M24.5 0V182" stroke="#f0f0f0"/><path d="M36.5 0V182" stroke="#f0f0f0"/><path d="M42.5 0V182" stroke="#f0f0f0"/><path d="M47.5 0V182" stroke="#f0f0f0"/><path d="M53.5 0V182" stroke="#f0f0f0"/><path d="M65.5 0V182" stroke="#f0f0f0"/><path d="M71.5 0V182" stroke="#f0f0f0"/><path d="M76.5 0V182" stroke="#f0f0f0"/><path d="M82.5 0V182" stroke="#f0f0f0"/><path d="M94.5 0V182" stroke="#f0f0f0"/><path d="M100.5 0V182" stroke="#f0f0f0"/><path d="M105.5 0V182" stroke="#f0f0f0"/><path d="M111.5 0V182" stroke="#f0f0f0"/><path d="M123.5 0V182" stroke="#f0f0f0"/><path d="M128.5 0V182" stroke="#f0f0f0"/><path d="M134.5 0V182" stroke="#f0f0f0"/><path d="M139.5 0V182" stroke="#f0f0f0"/><path d="M151.5 0V182" stroke="#f0f0f0"/><path d="M157.5 0V182" stroke="#f0f0f0"/><path d="M162.5 0V182" stroke="#f0f0f0"/><path d="M168.5 0V182" stroke="#f0f0f0"/><path d="M180.5 0V182" stroke="#f0f0f0"/><path d="M186.5 0V182" stroke="#f0f0f0"/><path d="M191.5 0V182" stroke="#f0f0f0"/><path d="M197.5 0V182" stroke="#f0f0f0"/><path d="M209.5 0V182" stroke="#f0f0f0"/><path d="M215.5 0V182" stroke="#f0f0f0"/><path d="M220.5 0V182" stroke="#f0f0f0"/><path d="M226.5 0V182" stroke="#f0f0f0"/><path d="M30.5 0V182" stroke="#dedede"/><path d="M59.5 0V182" stroke="#dedede"/><path d="M88.5 0V182" stroke="#dedede"/><path d="M117.5 0V182" stroke="#dedede"/><path d="M145.5 0V182" stroke="#dedede"/><path d="M174.5 0V182" stroke="#dedede"/><path d="M203.5 0V182" stroke="#dedede"/><path d="M0 23.5H233" stroke="#e0e0e0"/><path d="M0 46.5H233" stroke="#e0e0e0"/><path d="M0 69.5H233" stroke="#e0e0e0"/><path d="M0 91.5H233" stroke="#e0e0e0"/><path d="M0 113.5H233" stroke="#e0e0e0"/><path d="M0 136.5H233" stroke="#e0e0e0"/><path d="M0 159.5H233" stroke="#e0e0e0"/><path d="M0.5 182V0.5H233" fill="none" stroke="#3a3a3a"/></svg>
<div class="a" style="left:688px;top:451px;width:5px;height:1px;background:#1a1a1a"></div>
<div class="a t" style="top:444.94px;font-size:13px;line-height:13px;font-weight:bold;color:#000;right:1233.94px;transform-origin:100% 50%;transform:scaleX(0.9600);">2</div>
<div class="a" style="left:688px;top:473px;width:5px;height:1px;background:#1a1a1a"></div>
<div class="a t" style="top:466.94px;font-size:13px;line-height:13px;font-weight:bold;color:#000;right:1234.11px;transform-origin:100% 50%;transform:scaleX(0.9155);">1.75</div>
<div class="a" style="left:688px;top:496px;width:5px;height:1px;background:#1a1a1a"></div>
<div class="a t" style="top:489.94px;font-size:13px;line-height:13px;font-weight:bold;color:#000;right:1234.10px;transform-origin:100% 50%;transform:scaleX(0.9059);">1.5</div>
<div class="a" style="left:688px;top:519px;width:5px;height:1px;background:#1a1a1a"></div>
<div class="a t" style="top:512.93px;font-size:13px;line-height:13px;font-weight:bold;color:#000;right:1234.11px;transform-origin:100% 50%;transform:scaleX(0.9155);">1.25</div>
<div class="a" style="left:688px;top:541px;width:5px;height:1px;background:#1a1a1a"></div>
<div class="a t" style="top:534.93px;font-size:13px;line-height:13px;font-weight:bold;color:#000;right:1234.18px;transform-origin:100% 50%;transform:scaleX(0.9600);">1</div>
<div class="a" style="left:688px;top:563px;width:5px;height:1px;background:#1a1a1a"></div>
<div class="a t" style="top:556.93px;font-size:13px;line-height:13px;font-weight:bold;color:#000;right:1234.12px;transform-origin:100% 50%;transform:scaleX(0.9061);">0.75</div>
<div class="a" style="left:688px;top:586px;width:5px;height:1px;background:#1a1a1a"></div>
<div class="a t" style="top:579.93px;font-size:13px;line-height:13px;font-weight:bold;color:#000;right:1234.11px;transform-origin:100% 50%;transform:scaleX(0.8928);">0.5</div>
<div class="a" style="left:688px;top:609px;width:5px;height:1px;background:#1a1a1a"></div>
<div class="a t" style="top:602.93px;font-size:13px;line-height:13px;font-weight:bold;color:#000;right:1234.12px;transform-origin:100% 50%;transform:scaleX(0.9061);">0.25</div>
<div class="a" style="left:688px;top:631px;width:5px;height:1px;background:#1a1a1a"></div>
<div class="a t" style="top:624.93px;font-size:13px;line-height:13px;font-weight:bold;color:#000;right:1233.94px;transform-origin:100% 50%;transform:scaleX(0.9600);">0</div>
<div class="a" style="left:695px;top:634px;width:1px;height:5px;background:#1a1a1a"></div>
<div class="a t" style="top:639.83px;font-size:13px;line-height:13px;font-weight:bold;color:#000;left:694.39px;transform:translateX(-50%) scaleX(0.9600);">0</div>
<div class="a" style="left:724px;top:634px;width:1px;height:5px;background:#1a1a1a"></div>
<div class="a t" style="top:639.83px;font-size:13px;line-height:13px;font-weight:bold;color:#000;left:723.39px;transform:translateX(-50%) scaleX(0.9481);">50</div>
<div class="a" style="left:753px;top:634px;width:1px;height:5px;background:#1a1a1a"></div>
<div class="a t" style="top:639.83px;font-size:13px;line-height:13px;font-weight:bold;color:#000;left:752.26px;transform:translateX(-50%) scaleX(0.9561);">100</div>
<div class="a" style="left:782px;top:634px;width:1px;height:5px;background:#1a1a1a"></div>
<div class="a t" style="top:639.83px;font-size:13px;line-height:13px;font-weight:bold;color:#000;left:781.26px;transform:translateX(-50%) scaleX(0.9561);">150</div>
<div class="a" style="left:811px;top:634px;width:1px;height:5px;background:#1a1a1a"></div>
<div class="a t" style="top:639.83px;font-size:13px;line-height:13px;font-weight:bold;color:#000;left:810.38px;transform:translateX(-50%) scaleX(0.9446);">200</div>
<div class="a" style="left:839px;top:634px;width:1px;height:5px;background:#1a1a1a"></div>
<div class="a t" style="top:639.83px;font-size:13px;line-height:13px;font-weight:bold;color:#000;left:838.38px;transform:translateX(-50%) scaleX(0.9446);">250</div>
<div class="a" style="left:868px;top:634px;width:1px;height:5px;background:#1a1a1a"></div>
<div class="a t" style="top:639.83px;font-size:13px;line-height:13px;font-weight:bold;color:#000;left:867.49px;transform:translateX(-50%) scaleX(0.9333);">300</div>
<div class="a" style="left:897px;top:634px;width:1px;height:5px;background:#1a1a1a"></div>
<div class="a t" style="top:639.83px;font-size:13px;line-height:13px;font-weight:bold;color:#000;left:896.49px;transform:translateX(-50%) scaleX(0.9333);">350</div>
<div class="a" style="left:926px;top:634px;width:1px;height:5px;background:#1a1a1a"></div>
<div class="a t" style="top:639.83px;font-size:13px;line-height:13px;font-weight:bold;color:#000;left:925.49px;transform:translateX(-50%) scaleX(0.9333);">400</div>
<div class="a t" style="top:657.13px;font-size:13px;line-height:13px;font-weight:bold;color:#000;left:828.16px;transform:translateX(-50%) scaleX(0.9008);">Time</div>
<div class="a t" style="left:650.6px;top:534.73px;font-size:13px;line-height:13px;font-weight:bold;transform:translateX(-50%) rotate(-90deg) scaleX(0.9224);transform-origin:50% 50.5%">Deflection(mm)S1</div>
<div class="a cf" style="left:953px;top:443px;width:315px;height:235px;"></div>
<svg class="a" style="left:1010px;top:454px" width="238" height="176" viewBox="0 0 238 176"><rect x="0" y="0" width="238" height="176" fill="#fff"/><path d="M9.5 0V176" stroke="#f0f0f0"/><path d="M17.5 0V176" stroke="#f0f0f0"/><path d="M24.5 0V176" stroke="#f0f0f0"/><path d="M32.5 0V176" stroke="#f0f0f0"/><path d="M48.5 0V176" stroke="#f0f0f0"/><path d="M56.5 0V176" stroke="#f0f0f0"/><path d="M63.5 0V176" stroke="#f0f0f0"/><path d="M71.5 0V176" stroke="#f0f0f0"/><path d="M87.5 0V176" stroke="#f0f0f0"/><path d="M95.5 0V176" stroke="#f0f0f0"/><path d="M102.5 0V176" stroke="#f0f0f0"/><path d="M110.5 0V176" stroke="#f0f0f0"/><path d="M126.5 0V176" stroke="#f0f0f0"/><path d="M134.5 0V176" stroke="#f0f0f0"/><path d="M141.5 0V176" stroke="#f0f0f0"/><path d="M149.5 0V176" stroke="#f0f0f0"/><path d="M165.5 0V176" stroke="#f0f0f0"/><path d="M173.5 0V176" stroke="#f0f0f0"/><path d="M180.5 0V176" stroke="#f0f0f0"/><path d="M188.5 0V176" stroke="#f0f0f0"/><path d="M204.5 0V176" stroke="#f0f0f0"/><path d="M212.5 0V176" stroke="#f0f0f0"/><path d="M220.5 0V176" stroke="#f0f0f0"/><path d="M228.5 0V176" stroke="#f0f0f0"/><path d="M40.5 0V176" stroke="#dedede"/><path d="M79.5 0V176" stroke="#dedede"/><path d="M118.5 0V176" stroke="#dedede"/><path d="M157.5 0V176" stroke="#dedede"/><path d="M196.5 0V176" stroke="#dedede"/><path d="M236.5 0V176" stroke="#dedede"/><path d="M0 23.5H238" stroke="#e0e0e0"/><path d="M0 45.5H238" stroke="#e0e0e0"/><path d="M0 66.5H238" stroke="#e0e0e0"/><path d="M0 88.5H238" stroke="#e0e0e0"/><path d="M0 110.5H238" stroke="#e0e0e0"/><path d="M0 131.5H238" stroke="#e0e0e0"/><path d="M0 153.5H238" stroke="#e0e0e0"/><path d="M0.5 176V0.5H238" fill="none" stroke="#3a3a3a"/></svg>
<div class="a" style="left:1004px;top:455px;width:5px;height:1px;background:#1a1a1a"></div>
<div class="a t" style="top:448.94px;font-size:13px;line-height:13px;font-weight:normal;color:#000;right:917.74px;transform-origin:100% 50%;transform:scaleX(0.9043);">2</div>
<div class="a" style="left:1004px;top:477px;width:5px;height:1px;background:#1a1a1a"></div>
<div class="a t" style="top:470.94px;font-size:13px;line-height:13px;font-weight:normal;color:#000;right:917.94px;transform-origin:100% 50%;transform:scaleX(0.8168);">1.75</div>
<div class="a" style="left:1004px;top:499px;width:5px;height:1px;background:#1a1a1a"></div>
<div class="a t" style="top:492.94px;font-size:13px;line-height:13px;font-weight:normal;color:#000;right:917.93px;transform-origin:100% 50%;transform:scaleX(0.8121);">1.5</div>
<div class="a" style="left:1004px;top:520px;width:5px;height:1px;background:#1a1a1a"></div>
<div class="a t" style="top:513.93px;font-size:13px;line-height:13px;font-weight:normal;color:#000;right:917.94px;transform-origin:100% 50%;transform:scaleX(0.8168);">1.25</div>
<div class="a" style="left:1004px;top:542px;width:5px;height:1px;background:#1a1a1a"></div>
<div class="a t" style="top:535.93px;font-size:13px;line-height:13px;font-weight:normal;color:#000;right:917.71px;transform-origin:100% 50%;transform:scaleX(0.9455);">1</div>
<div class="a" style="left:1004px;top:564px;width:5px;height:1px;background:#1a1a1a"></div>
<div class="a t" style="top:557.93px;font-size:13px;line-height:13px;font-weight:normal;color:#000;right:917.95px;transform-origin:100% 50%;transform:scaleX(0.8000);">0.75</div>
<div class="a" style="left:1004px;top:585px;width:5px;height:1px;background:#1a1a1a"></div>
<div class="a t" style="top:578.93px;font-size:13px;line-height:13px;font-weight:normal;color:#000;right:917.94px;transform-origin:100% 50%;transform:scaleX(0.7882);">0.5</div>
<div class="a" style="left:1004px;top:607px;width:5px;height:1px;background:#1a1a1a"></div>
<div class="a t" style="top:600.93px;font-size:13px;line-height:13px;font-weight:normal;color:#000;right:917.95px;transform-origin:100% 50%;transform:scaleX(0.8000);">0.25</div>
<div class="a" style="left:1004px;top:629px;width:5px;height:1px;background:#1a1a1a"></div>
<div class="a t" style="top:622.93px;font-size:13px;line-height:13px;font-weight:normal;color:#000;right:918.00px;transform-origin:100% 50%;transform:scaleX(0.8320);">0</div>
<div class="a" style="left:1011px;top:632px;width:1px;height:5px;background:#1a1a1a"></div>
<div class="a t" style="top:638.33px;font-size:13px;line-height:13px;font-weight:bold;color:#000;left:1010.40px;transform:translateX(-50%) scaleX(0.9240);">00:00</div>
<div class="a" style="left:1050px;top:632px;width:1px;height:5px;background:#1a1a1a"></div>
<div class="a t" style="top:638.33px;font-size:13px;line-height:13px;font-weight:bold;color:#000;left:1049.40px;transform:translateX(-50%) scaleX(0.9240);">00:00</div>
<div class="a" style="left:1089px;top:632px;width:1px;height:5px;background:#1a1a1a"></div>
<div class="a t" style="top:638.33px;font-size:13px;line-height:13px;font-weight:bold;color:#000;left:1088.40px;transform:translateX(-50%) scaleX(0.9240);">00:00</div>
<div class="a" style="left:1128px;top:632px;width:1px;height:5px;background:#1a1a1a"></div>
<div class="a t" style="top:638.33px;font-size:13px;line-height:13px;font-weight:bold;color:#000;left:1127.40px;transform:translateX(-50%) scaleX(0.9240);">00:00</div>
<div class="a" style="left:1167px;top:632px;width:1px;height:5px;background:#1a1a1a"></div>
<div class="a t" style="top:638.33px;font-size:13px;line-height:13px;font-weight:bold;color:#000;left:1166.40px;transform:translateX(-50%) scaleX(0.9240);">00:00</div>
<div class="a" style="left:1206px;top:632px;width:1px;height:5px;background:#1a1a1a"></div>
<div class="a t" style="top:638.33px;font-size:13px;line-height:13px;font-weight:bold;color:#000;left:1205.40px;transform:translateX(-50%) scaleX(0.9240);">00:00</div>
<div class="a" style="left:1246px;top:632px;width:1px;height:5px;background:#1a1a1a"></div>
<div class="a t" style="top:638.33px;font-size:13px;line-height:13px;font-weight:bold;color:#000;left:1245.40px;transform:translateX(-50%) scaleX(0.9240);">00:00</div>
<div class="a t" style="top:655.33px;font-size:13px;line-height:13px;font-weight:bold;color:#000;left:1128.16px;transform:translateX(-50%) scaleX(0.9008);">Time</div>
<div class="a t" style="left:969.4px;top:535.03px;font-size:13px;line-height:13px;font-weight:bold;transform:translateX(-50%) rotate(-90deg) scaleX(0.9291);transform-origin:50% 50.5%">Deflection(mm)S2</div>
<div class="a cf" style="left:1290px;top:440px;width:315px;height:235px;"></div>
<svg class="a" style="left:1347px;top:451px" width="237" height="176" viewBox="0 0 237 176"><rect x="0" y="0" width="237" height="176" fill="#fff"/><path d="M9.5 0V176" stroke="#f0f0f0"/><path d="M17.5 0V176" stroke="#f0f0f0"/><path d="M24.5 0V176" stroke="#f0f0f0"/><path d="M32.5 0V176" stroke="#f0f0f0"/><path d="M48.5 0V176" stroke="#f0f0f0"/><path d="M56.5 0V176" stroke="#f0f0f0"/><path d="M63.5 0V176" stroke="#f0f0f0"/><path d="M71.5 0V176" stroke="#f0f0f0"/><path d="M87.5 0V176" stroke="#f0f0f0"/><path d="M95.5 0V176" stroke="#f0f0f0"/><path d="M102.5 0V176" stroke="#f0f0f0"/><path d="M110.5 0V176" stroke="#f0f0f0"/><path d="M126.5 0V176" stroke="#f0f0f0"/><path d="M134.5 0V176" stroke="#f0f0f0"/><path d="M142.5 0V176" stroke="#f0f0f0"/><path d="M150.5 0V176" stroke="#f0f0f0"/><path d="M166.5 0V176" stroke="#f0f0f0"/><path d="M174.5 0V176" stroke="#f0f0f0"/><path d="M181.5 0V176" stroke="#f0f0f0"/><path d="M189.5 0V176" stroke="#f0f0f0"/><path d="M205.5 0V176" stroke="#f0f0f0"/><path d="M213.5 0V176" stroke="#f0f0f0"/><path d="M220.5 0V176" stroke="#f0f0f0"/><path d="M228.5 0V176" stroke="#f0f0f0"/><path d="M40.5 0V176" stroke="#dedede"/><path d="M79.5 0V176" stroke="#dedede"/><path d="M118.5 0V176" stroke="#dedede"/><path d="M158.5 0V176" stroke="#dedede"/><path d="M197.5 0V176" stroke="#dedede"/><path d="M0 23.5H237" stroke="#e0e0e0"/><path d="M0 45.5H237" stroke="#e0e0e0"/><path d="M0 66.5H237" stroke="#e0e0e0"/><path d="M0 88.5H237" stroke="#e0e0e0"/><path d="M0 110.5H237" stroke="#e0e0e0"/><path d="M0 131.5H237" stroke="#e0e0e0"/><path d="M0 153.5H237" stroke="#e0e0e0"/><path d="M0.5 176V0.5H237" fill="none" stroke="#3a3a3a"/></svg>
<div class="a" style="left:1341px;top:452px;width:5px;height:1px;background:#1a1a1a"></div>
<div class="a t" style="top:445.94px;font-size:13px;line-height:13px;font-weight:normal;color:#000;right:580.74px;transform-origin:100% 50%;transform:scaleX(0.9043);">2</div>
<div class="a" style="left:1341px;top:474px;width:5px;height:1px;background:#1a1a1a"></div>
<div class="a t" style="top:467.94px;font-size:13px;line-height:13px;font-weight:normal;color:#000;right:580.94px;transform-origin:100% 50%;transform:scaleX(0.8168);">1.75</div>
<div class="a" style="left:1341px;top:496px;width:5px;height:1px;background:#1a1a1a"></div>
<div class="a t" style="top:489.94px;font-size:13px;line-height:13px;font-weight:normal;color:#000;right:580.93px;transform-origin:100% 50%;transform:scaleX(0.8121);">1.5</div>
<div class="a" style="left:1341px;top:517px;width:5px;height:1px;background:#1a1a1a"></div>
<div class="a t" style="top:510.94px;font-size:13px;line-height:13px;font-weight:normal;color:#000;right:580.94px;transform-origin:100% 50%;transform:scaleX(0.8168);">1.25</div>
<div class="a" style="left:1341px;top:539px;width:5px;height:1px;background:#1a1a1a"></div>
<div class="a t" style="top:532.93px;font-size:13px;line-height:13px;font-weight:normal;color:#000;right:580.71px;transform-origin:100% 50%;transform:scaleX(0.9455);">1</div>
<div class="a" style="left:1341px;top:561px;width:5px;height:1px;background:#1a1a1a"></div>
<div class="a t" style="top:554.93px;font-size:13px;line-height:13px;font-weight:normal;color:#000;right:580.95px;transform-origin:100% 50%;transform:scaleX(0.8000);">0.75</div>
<div class="a" style="left:1341px;top:582px;width:5px;height:1px;background:#1a1a1a"></div>
<div class="a t" style="top:575.93px;font-size:13px;line-height:13px;font-weight:normal;color:#000;right:580.94px;transform-origin:100% 50%;transform:scaleX(0.7882);">0.5</div>
<div class="a" style="left:1341px;top:604px;width:5px;height:1px;background:#1a1a1a"></div>
<div class="a t" style="top:597.93px;font-size:13px;line-height:13px;font-weight:normal;color:#000;right:580.95px;transform-origin:100% 50%;transform:scaleX(0.8000);">0.25</div>
<div class="a" style="left:1341px;top:626px;width:5px;height:1px;background:#1a1a1a"></div>
<div class="a t" style="top:619.93px;font-size:13px;line-height:13px;font-weight:normal;color:#000;right:581.00px;transform-origin:100% 50%;transform:scaleX(0.8320);">0</div>
<div class="a" style="left:1348px;top:629px;width:1px;height:5px;background:#1a1a1a"></div>
<div class="a t" style="top:635.03px;font-size:13px;line-height:13px;font-weight:bold;color:#000;left:1347.40px;transform:translateX(-50%) scaleX(0.9054);">00:00</div>
<div class="a" style="left:1387px;top:629px;width:1px;height:5px;background:#1a1a1a"></div>
<div class="a t" style="top:635.03px;font-size:13px;line-height:13px;font-weight:bold;color:#000;left:1386.40px;transform:translateX(-50%) scaleX(0.9054);">00:00</div>
<div class="a" style="left:1426px;top:629px;width:1px;height:5px;background:#1a1a1a"></div>
<div class="a t" style="top:635.03px;font-size:13px;line-height:13px;font-weight:bold;color:#000;left:1425.40px;transform:translateX(-50%) scaleX(0.9054);">00:00</div>
<div class="a" style="left:1465px;top:629px;width:1px;height:5px;background:#1a1a1a"></div>
<div class="a t" style="top:635.03px;font-size:13px;line-height:13px;font-weight:bold;color:#000;left:1464.40px;transform:translateX(-50%) scaleX(0.9054);">00:00</div>
<div class="a" style="left:1505px;top:629px;width:1px;height:5px;background:#1a1a1a"></div>
<div class="a t" style="top:635.03px;font-size:13px;line-height:13px;font-weight:bold;color:#000;left:1504.40px;transform:translateX(-50%) scaleX(0.9054);">00:00</div>
<div class="a" style="left:1544px;top:629px;width:1px;height:5px;background:#1a1a1a"></div>
<div class="a t" style="top:635.03px;font-size:13px;line-height:13px;font-weight:bold;color:#000;left:1543.40px;transform:translateX(-50%) scaleX(0.9054);">00:00</div>
<div class="a" style="left:1583px;top:629px;width:1px;height:5px;background:#1a1a1a"></div>
<div class="a t" style="top:635.03px;font-size:13px;line-height:13px;font-weight:bold;color:#000;left:1582.40px;transform:translateX(-50%) scaleX(0.9054);">00:00</div>
<div class="a t" style="top:651.93px;font-size:13px;line-height:13px;font-weight:bold;color:#000;left:1466.16px;transform:translateX(-50%) scaleX(0.9008);">Time</div>
<div class="a t" style="left:1306.7px;top:532.03px;font-size:13px;line-height:13px;font-weight:bold;transform:translateX(-50%) rotate(-90deg) scaleX(0.9291);transform-origin:50% 50.5%">Deflection(mm)S3</div>
<div class="a cf" style="left:622px;top:395px;width:84px;height:27px;"></div>
<svg class="a" style="left:633px;top:401px" width="62" height="17" viewBox="0 0 62 17">
<defs><linearGradient id="pg622" x1="0" y1="0" x2="1" y2="1"><stop offset="0" stop-color="#e9e9e9"/><stop offset="1" stop-color="#cfcfcf"/></linearGradient></defs>
<rect x="0.2" y="0.1" width="18.4" height="15.6" fill="url(#pg622)"/><path d="M0.4 15.4H18.2V0.3" fill="none" stroke="#9c9c9c" stroke-width="0.9"/>
<rect x="20.3" y="0.1" width="19.5" height="15.6" fill="#7b7b7b"/><path d="M20.8 15.6V0.6H39.6" fill="none" stroke="#8c8c8c" stroke-width="0.8"/>
<rect x="42" y="0.1" width="18.8" height="15.6" fill="url(#pg622)"/><path d="M42.2 15.4H60.4V0.3" fill="none" stroke="#9c9c9c" stroke-width="0.9"/>
<rect x="1.8" y="3.1" width="3" height="2.9" rx="0.8" fill="#2c6a1c"/>
<path d="M9.5 2V14.8M3 8.5H15.8" stroke="#000" stroke-width="1.1"/><circle cx="9.5" cy="8.5" r="1.45" fill="#f4f4f4" stroke="#000" stroke-width="0.9"/>
<rect x="22.7" y="2.9" width="3.3" height="3.2" rx="1.2" fill="#3cf01c"/>
<path d="M29.9 9.5L24.9 14.5" stroke="#000" stroke-width="2.8"/><path d="M29.5 9.9L25.4 14" stroke="#cfcfcf" stroke-width="0.9" stroke-dasharray="1.2 0.7"/>
<circle cx="32.9" cy="6.3" r="4.1" fill="#dcdcff" stroke="#000" stroke-width="1.1"/><path d="M30.6 6.3H35.2M32.9 4V8.6" stroke="#000" stroke-width="1"/>
<path d="M31.8 12.3H37.2L34.5 15.2Z" fill="#000"/>
<rect x="43.7" y="3" width="3.1" height="3" rx="0.8" fill="#2c6a1c"/>
<path d="M48.5 9.5V4.6Q49.5 3.1 50.5 4.6V8.5M50.5 4.6V3.2Q51.5 1.7 52.5 3.2V8.5M52.5 3.6Q53.5 2.2 54.5 3.8V8.5M54.5 5.4Q55.5 4.2 56.5 5.8V11L54.8 14.5M48.5 9.5L46.6 7.8L45.3 8.8L48.6 13.3L49.4 14.5" fill="none" stroke="#000" stroke-width="0.9"/>
</svg>
<div class="a cf" style="left:953px;top:396px;width:84px;height:27px;"></div>
<svg class="a" style="left:964px;top:402px" width="62" height="17" viewBox="0 0 62 17">
<defs><linearGradient id="pg953" x1="0" y1="0" x2="1" y2="1"><stop offset="0" stop-color="#e9e9e9"/><stop offset="1" stop-color="#cfcfcf"/></linearGradient></defs>
<rect x="0.2" y="0.1" width="18.4" height="15.6" fill="url(#pg953)"/><path d="M0.4 15.4H18.2V0.3" fill="none" stroke="#9c9c9c" stroke-width="0.9"/>
<rect x="20.3" y="0.1" width="19.5" height="15.6" fill="#7b7b7b"/><path d="M20.8 15.6V0.6H39.6" fill="none" stroke="#8c8c8c" stroke-width="0.8"/>
<rect x="42" y="0.1" width="18.8" height="15.6" fill="url(#pg953)"/><path d="M42.2 15.4H60.4V0.3" fill="none" stroke="#9c9c9c" stroke-width="0.9"/>
<rect x="1.8" y="3.1" width="3" height="2.9" rx="0.8" fill="#2c6a1c"/>
<path d="M9.5 2V14.8M3 8.5H15.8" stroke="#000" stroke-width="1.1"/><circle cx="9.5" cy="8.5" r="1.45" fill="#f4f4f4" stroke="#000" stroke-width="0.9"/>
<rect x="22.7" y="2.9" width="3.3" height="3.2" rx="1.2" fill="#3cf01c"/>
<path d="M29.9 9.5L24.9 14.5" stroke="#000" stroke-width="2.8"/><path d="M29.5 9.9L25.4 14" stroke="#cfcfcf" stroke-width="0.9" stroke-dasharray="1.2 0.7"/>
<circle cx="32.9" cy="6.3" r="4.1" fill="#dcdcff" stroke="#000" stroke-width="1.1"/><path d="M30.6 6.3H35.2M32.9 4V8.6" stroke="#000" stroke-width="1"/>
<path d="M31.8 12.3H37.2L34.5 15.2Z" fill="#000"/>
<rect x="43.7" y="3" width="3.1" height="3" rx="0.8" fill="#2c6a1c"/>
<path d="M48.5 9.5V4.6Q49.5 3.1 50.5 4.6V8.5M50.5 4.6V3.2Q51.5 1.7 52.5 3.2V8.5M52.5 3.6Q53.5 2.2 54.5 3.8V8.5M54.5 5.4Q55.5 4.2 56.5 5.8V11L54.8 14.5M48.5 9.5L46.6 7.8L45.3 8.8L48.6 13.3L49.4 14.5" fill="none" stroke="#000" stroke-width="0.9"/>
</svg>
<div class="a cf" style="left:1288px;top:397px;width:84px;height:27px;"></div>
<svg class="a" style="left:1299px;top:403px" width="62" height="17" viewBox="0 0 62 17">
<defs><linearGradient id="pg1288" x1="0" y1="0" x2="1" y2="1"><stop offset="0" stop-color="#e9e9e9"/><stop offset="1" stop-color="#cfcfcf"/></linearGradient></defs>
<rect x="0.2" y="0.1" width="18.4" height="15.6" fill="url(#pg1288)"/><path d="M0.4 15.4H18.2V0.3" fill="none" stroke="#9c9c9c" stroke-width="0.9"/>
<rect x="20.3" y="0.1" width="19.5" height="15.6" fill="#7b7b7b"/><path d="M20.8 15.6V0.6H39.6" fill="none" stroke="#8c8c8c" stroke-width="0.8"/>
<rect x="42" y="0.1" width="18.8" height="15.6" fill="url(#pg1288)"/><path d="M42.2 15.4H60.4V0.3" fill="none" stroke="#9c9c9c" stroke-width="0.9"/>
<rect x="1.8" y="3.1" width="3" height="2.9" rx="0.8" fill="#2c6a1c"/>
<path d="M9.5 2V14.8M3 8.5H15.8" stroke="#000" stroke-width="1.1"/><circle cx="9.5" cy="8.5" r="1.45" fill="#f4f4f4" stroke="#000" stroke-width="0.9"/>
<rect x="22.7" y="2.9" width="3.3" height="3.2" rx="1.2" fill="#3cf01c"/>
<path d="M29.9 9.5L24.9 14.5" stroke="#000" stroke-width="2.8"/><path d="M29.5 9.9L25.4 14" stroke="#cfcfcf" stroke-width="0.9" stroke-dasharray="1.2 0.7"/>
<circle cx="32.9" cy="6.3" r="4.1" fill="#dcdcff" stroke="#000" stroke-width="1.1"/><path d="M30.6 6.3H35.2M32.9 4V8.6" stroke="#000" stroke-width="1"/>
<path d="M31.8 12.3H37.2L34.5 15.2Z" fill="#000"/>
<rect x="43.7" y="3" width="3.1" height="3" rx="0.8" fill="#2c6a1c"/>
<path d="M48.5 9.5V4.6Q49.5 3.1 50.5 4.6V8.5M50.5 4.6V3.2Q51.5 1.7 52.5 3.2V8.5M52.5 3.6Q53.5 2.2 54.5 3.8V8.5M54.5 5.4Q55.5 4.2 56.5 5.8V11L54.8 14.5M48.5 9.5L46.6 7.8L45.3 8.8L48.6 13.3L49.4 14.5" fill="none" stroke="#000" stroke-width="0.9"/>
</svg>
<div class="a lbl" style="left:627px;top:695px;width:187px;height:38px;"></div>
<div class="a t" style="top:701.01px;font-size:10.5px;line-height:10.5px;font-weight:normal;color:#000;font-family:&quot;DejaVu Sans&quot;,sans-serif;left:720.12px;transform:translateX(-50%) scaleX(1.0846);-webkit-text-stroke:.3px #000;">Load(kgs)</div>
<div class="a dsp" style="left:628px;top:744px;width:185px;height:35px;"></div>
<div class="a t" style="top:752.30px;font-size:20px;line-height:20px;font-weight:normal;color:#66ff00;font-family:&quot;DejaVu Sans&quot;,sans-serif;left:720.01px;transform:translateX(-50%) scaleX(1.0852);">8.5</div>
<div class="a lbl" style="left:628px;top:816px;width:187px;height:38px;"></div>
<div class="a t" style="top:822.31px;font-size:10.5px;line-height:10.5px;font-weight:normal;color:#000;font-family:&quot;DejaVu Sans&quot;,sans-serif;left:721.15px;transform:translateX(-50%) scaleX(1.1195);-webkit-text-stroke:.3px #000;">Deflection(mm)</div>
<div class="a dsp" style="left:628px;top:869px;width:185px;height:35px;"></div>
<div class="a t" style="top:877.30px;font-size:20px;line-height:20px;font-weight:normal;color:#66ff00;font-family:&quot;DejaVu Sans&quot;,sans-serif;left:719.75px;transform:translateX(-50%) scaleX(1.0404);">1.627</div>
<div class="a lbl" style="left:977px;top:689px;width:187px;height:38px;"></div>
<div class="a t" style="top:695.11px;font-size:10.5px;line-height:10.5px;font-weight:normal;color:#000;font-family:&quot;DejaVu Sans&quot;,sans-serif;left:1070.12px;transform:translateX(-50%) scaleX(1.0846);-webkit-text-stroke:.3px #000;">Load(kgs)</div>
<div class="a dsp" style="left:978px;top:744px;width:185px;height:35px;"></div>
<div class="a t" style="top:752.30px;font-size:20px;line-height:20px;font-weight:normal;color:#66ff00;font-family:&quot;DejaVu Sans&quot;,sans-serif;left:1070.02px;transform:translateX(-50%) scaleX(1.0731);">-8.5</div>
<div class="a lbl" style="left:973px;top:819px;width:187px;height:38px;"></div>
<div class="a t" style="top:825.21px;font-size:10.5px;line-height:10.5px;font-weight:normal;color:#000;font-family:&quot;DejaVu Sans&quot;,sans-serif;left:1065.95px;transform:translateX(-50%) scaleX(1.1195);-webkit-text-stroke:.3px #000;">Deflection(mm)</div>
<div class="a dsp" style="left:974px;top:870px;width:185px;height:35px;"></div>
<div class="a t" style="top:878.30px;font-size:20px;line-height:20px;font-weight:normal;color:#66ff00;font-family:&quot;DejaVu Sans&quot;,sans-serif;left:1065.36px;transform:translateX(-50%) scaleX(1.0333);">1.384</div>
<div class="a lbl" style="left:1297px;top:686px;width:187px;height:38px;"></div>
<div class="a t" style="top:692.21px;font-size:10.5px;line-height:10.5px;font-weight:normal;color:#000;font-family:&quot;DejaVu Sans&quot;,sans-serif;left:1390.22px;transform:translateX(-50%) scaleX(1.0989);-webkit-text-stroke:.3px #000;">load(kgs)</div>
<div class="a dsp" style="left:1298px;top:745px;width:185px;height:35px;"></div>
<div class="a t" style="top:753.80px;font-size:20px;line-height:20px;font-weight:normal;color:#66ff00;font-family:&quot;DejaVu Sans&quot;,sans-serif;left:1390.24px;transform:translateX(-50%) scaleX(1.0708);">-29.2</div>
<div class="a lbl" style="left:1297px;top:814px;width:187px;height:38px;"></div>
<div class="a t" style="top:819.91px;font-size:10.5px;line-height:10.5px;font-weight:normal;color:#000;font-family:&quot;DejaVu Sans&quot;,sans-serif;left:1390.15px;transform:translateX(-50%) scaleX(1.1195);-webkit-text-stroke:.3px #000;">Deflection(mm)</div>
<div class="a dsp" style="left:1298px;top:870px;width:185px;height:35px;"></div>
<div class="a t" style="top:878.30px;font-size:20px;line-height:20px;font-weight:normal;color:#66ff00;font-family:&quot;DejaVu Sans&quot;,sans-serif;left:1389.71px;transform:translateX(-50%) scaleX(1.0507);">2.403</div>
<div class="a flat" style="left:826px;top:754px;width:125px;height:38px;"></div>
<div class="a t" style="top:768.99px;font-size:11.5px;line-height:11.5px;font-weight:bold;color:#000;left:888.01px;transform:translateX(-50%) scaleX(0.9089);word-spacing:2px;">TARE LOAD S1</div>
<div class="a flat" style="left:823px;top:876px;width:125px;height:38px;"></div>
<div class="a t" style="top:890.89px;font-size:11.5px;line-height:11.5px;font-weight:bold;color:#000;left:885.06px;transform:translateX(-50%) scaleX(0.9266);word-spacing:2px;">TARE LVDT S1</div>
<div class="a flat" style="left:1166px;top:755px;width:125px;height:38px;"></div>
<div class="a t" style="top:769.99px;font-size:11.5px;line-height:11.5px;font-weight:bold;color:#000;left:1228.13px;transform:translateX(-50%) scaleX(0.9115);word-spacing:2px;">TARE LOAD S2</div>
<div class="a flat" style="left:1166px;top:876px;width:125px;height:38px;"></div>
<div class="a t" style="top:890.99px;font-size:11.5px;line-height:11.5px;font-weight:bold;color:#000;left:1227.96px;transform:translateX(-50%) scaleX(0.9266);word-spacing:2px;">TARE LVDT S2</div>
<div class="a flat" style="left:1487px;top:746px;width:125px;height:38px;"></div>
<div class="a t" style="top:761.19px;font-size:11.5px;line-height:11.5px;font-weight:bold;color:#000;left:1549.13px;transform:translateX(-50%) scaleX(0.9115);word-spacing:2px;">TARE LOAD S3</div>
<div class="a flat" style="left:1487px;top:874px;width:125px;height:38px;"></div>
<div class="a t" style="top:889.19px;font-size:11.5px;line-height:11.5px;font-weight:bold;color:#000;left:1549.16px;transform:translateX(-50%) scaleX(0.9266);word-spacing:2px;">TARE LVDT S3</div>
<div class="a t" style="top:701.13px;font-size:13px;line-height:13px;font-weight:bold;color:#000;left:832.83px;transform-origin:0 50%;transform:scaleX(0.9348);">Setup-1</div>
<div class="a" style="left:841px;top:718px;width:27px;height:30px;background:#ff0000;border:2px solid;border-color:#ff5a5a #b00000 #b00000 #ff5a5a;box-shadow:inset 1px 1px 0 #ff8a8a,inset -1px -1px 0 #d80000"></div>
<div class="a t" style="top:701.13px;font-size:13px;line-height:13px;font-weight:bold;color:#000;left:1188.83px;transform-origin:0 50%;transform:scaleX(0.9348);">Setup-2</div>
<div class="a" style="left:1197px;top:718px;width:27px;height:30px;background:#ff0000;border:2px solid;border-color:#ff5a5a #b00000 #b00000 #ff5a5a;box-shadow:inset 1px 1px 0 #ff8a8a,inset -1px -1px 0 #d80000"></div>
<div class="a t" style="top:692.13px;font-size:13px;line-height:13px;font-weight:bold;color:#000;left:1500.03px;transform-origin:0 50%;transform:scaleX(0.9348);">Setup-3</div>
<div class="a" style="left:1508px;top:709px;width:27px;height:30px;background:#ff0000;border:2px solid;border-color:#ff5a5a #b00000 #b00000 #ff5a5a;box-shadow:inset 1px 1px 0 #ff8a8a,inset -1px -1px 0 #d80000"></div>
<div class="a" style="left:1613px;top:155px;width:287px;height:404px;border:1px solid #5a5a5a;box-shadow:inset -1px -1px 0 #f8f8f8"></div>
<div class="a t" style="top:185.13px;font-size:13px;line-height:13px;font-weight:bold;color:#000;left:1621.68px;transform-origin:0 50%;transform:scaleX(0.8327);">s1 UL_1</div>
<div class="a" style="left:1620px;top:200.8px;width:30.5px;height:32.5px;border-radius:50%;background:radial-gradient(closest-side,rgba(225,225,225,0) 80%,#e1e1e1 100%),linear-gradient(135deg,#a8a8a8 0%,#bcbcbc 30%,#e6e6e6 50%,#ffffff 64%,#ffffff 100%)"></div>
<div class="a" style="left:1623.8px;top:204.8px;width:22.4px;height:24px;border-radius:50%;background:radial-gradient(circle at 27% 27%,rgba(215,235,195,.8) 0%,rgba(150,190,120,.3) 9%,rgba(90,130,60,0) 22%),radial-gradient(circle at 36% 32%,#3d6a24 0%,#2f5a16 30%,#264a10 58%,#18340a 85%,#102606 100%)"></div>
<div class="a t" style="top:275.94px;font-size:13px;line-height:13px;font-weight:bold;color:#000;left:1621.69px;transform-origin:0 50%;transform:scaleX(0.8102);">s1 BL_1</div>
<div class="a" style="left:1620px;top:291.6px;width:30.5px;height:32.5px;border-radius:50%;background:radial-gradient(closest-side,rgba(225,225,225,0) 80%,#e1e1e1 100%),linear-gradient(135deg,#a8a8a8 0%,#bcbcbc 30%,#e6e6e6 50%,#ffffff 64%,#ffffff 100%)"></div>
<div class="a" style="left:1623.8px;top:295.6px;width:22.4px;height:24px;border-radius:50%;background:radial-gradient(circle at 27% 27%,rgba(215,235,195,.8) 0%,rgba(150,190,120,.3) 9%,rgba(90,130,60,0) 22%),radial-gradient(circle at 36% 32%,#3d6a24 0%,#2f5a16 30%,#264a10 58%,#18340a 85%,#102606 100%)"></div>
<div class="a t" style="top:185.13px;font-size:13px;line-height:13px;font-weight:bold;color:#000;left:1723.68px;transform-origin:0 50%;transform:scaleX(0.8327);">s2 UL_1</div>
<div class="a" style="left:1721.7px;top:200.8px;width:30.5px;height:32.5px;border-radius:50%;background:radial-gradient(closest-side,rgba(225,225,225,0) 80%,#e1e1e1 100%),linear-gradient(135deg,#a8a8a8 0%,#bcbcbc 30%,#e6e6e6 50%,#ffffff 64%,#ffffff 100%)"></div>
<div class="a" style="left:1725.5px;top:204.8px;width:22.4px;height:24px;border-radius:50%;background:radial-gradient(circle at 27% 27%,rgba(215,235,195,.8) 0%,rgba(150,190,120,.3) 9%,rgba(90,130,60,0) 22%),radial-gradient(circle at 36% 32%,#3d6a24 0%,#2f5a16 30%,#264a10 58%,#18340a 85%,#102606 100%)"></div>
<div class="a t" style="top:275.94px;font-size:13px;line-height:13px;font-weight:bold;color:#000;left:1723.69px;transform-origin:0 50%;transform:scaleX(0.8102);">s2 BL_1</div>
<div class="a" style="left:1721.7px;top:291.6px;width:30.5px;height:32.5px;border-radius:50%;background:radial-gradient(closest-side,rgba(225,225,225,0) 80%,#e1e1e1 100%),linear-gradient(135deg,#a8a8a8 0%,#bcbcbc 30%,#e6e6e6 50%,#ffffff 64%,#ffffff 100%)"></div>
<div class="a" style="left:1725.5px;top:295.6px;width:22.4px;height:24px;border-radius:50%;background:radial-gradient(circle at 27% 27%,rgba(215,235,195,.8) 0%,rgba(150,190,120,.3) 9%,rgba(90,130,60,0) 22%),radial-gradient(circle at 36% 32%,#3d6a24 0%,#2f5a16 30%,#264a10 58%,#18340a 85%,#102606 100%)"></div>
<div class="a t" style="top:185.13px;font-size:13px;line-height:13px;font-weight:bold;color:#000;left:1825.78px;transform-origin:0 50%;transform:scaleX(0.8327);">s3 UL_1</div>
<div class="a" style="left:1823.8px;top:200.8px;width:30.5px;height:32.5px;border-radius:50%;background:radial-gradient(closest-side,rgba(225,225,225,0) 80%,#e1e1e1 100%),linear-gradient(135deg,#a8a8a8 0%,#bcbcbc 30%,#e6e6e6 50%,#ffffff 64%,#ffffff 100%)"></div>
<div class="a" style="left:1827.6px;top:204.8px;width:22.4px;height:24px;border-radius:50%;background:radial-gradient(circle at 27% 27%,rgba(215,235,195,.8) 0%,rgba(150,190,120,.3) 9%,rgba(90,130,60,0) 22%),radial-gradient(circle at 36% 32%,#3d6a24 0%,#2f5a16 30%,#264a10 58%,#18340a 85%,#102606 100%)"></div>
<div class="a t" style="top:275.94px;font-size:13px;line-height:13px;font-weight:bold;color:#000;left:1825.79px;transform-origin:0 50%;transform:scaleX(0.8102);">s3 BL_1</div>
<div class="a" style="left:1823.8px;top:291.6px;width:30.5px;height:32.5px;border-radius:50%;background:radial-gradient(closest-side,rgba(225,225,225,0) 80%,#e1e1e1 100%),linear-gradient(135deg,#a8a8a8 0%,#bcbcbc 30%,#e6e6e6 50%,#ffffff 64%,#ffffff 100%)"></div>
<div class="a" style="left:1827.6px;top:295.6px;width:22.4px;height:24px;border-radius:50%;background:radial-gradient(circle at 27% 27%,rgba(215,235,195,.8) 0%,rgba(150,190,120,.3) 9%,rgba(90,130,60,0) 22%),radial-gradient(circle at 36% 32%,#3d6a24 0%,#2f5a16 30%,#264a10 58%,#18340a 85%,#102606 100%)"></div>
<div class="a t" style="top:360.24px;font-size:13px;line-height:13px;font-weight:bold;color:#000;left:1623.83px;transform-origin:0 50%;transform:scaleX(0.8877);">Pump1 Status</div>
<div class="a" style="left:1628px;top:376px;width:85px;height:53px;background:#ff0000;border:1px solid #000;box-shadow:inset 2px 2px 0 #d8dcdc,inset -2px -2px 0 #4a5252"></div>
<div class="a t" style="top:396.19px;font-size:12.5px;line-height:12.5px;font-weight:normal;color:#380000;left:1659.90px;transform-origin:0 50%;transform:scaleX(0.8000);">OFF</div>
<div class="a t" style="top:361.24px;font-size:13px;line-height:13px;font-weight:bold;color:#000;left:1765.63px;transform-origin:0 50%;transform:scaleX(0.8888);">Pump2  Status</div>
<div class="a" style="left:1778px;top:377px;width:85px;height:53px;background:#ff0000;border:1px solid #000;box-shadow:inset 2px 2px 0 #d8dcdc,inset -2px -2px 0 #4a5252"></div>
<div class="a t" style="top:397.19px;font-size:12.5px;line-height:12.5px;font-weight:normal;color:#380000;left:1810.10px;transform-origin:0 50%;transform:scaleX(0.8000);">OFF</div>
<div class="a t" style="top:462.04px;font-size:13px;line-height:13px;font-weight:bold;color:#000;left:1705.83px;transform-origin:0 50%;transform:scaleX(0.8901);">Pump3 Status</div>
<div class="a" style="left:1715px;top:478px;width:85px;height:53px;background:#ff0000;border:1px solid #000;box-shadow:inset 2px 2px 0 #d8dcdc,inset -2px -2px 0 #4a5252"></div>
<div class="a t" style="top:498.19px;font-size:12.5px;line-height:12.5px;font-weight:normal;color:#380000;left:1747.30px;transform-origin:0 50%;transform:scaleX(0.8000);">OFF</div>
<div class="a t" style="top:581.99px;font-size:12.5px;line-height:12.5px;font-weight:bold;color:#ff0000;left:1749.31px;transform:translateX(-50%) scaleX(0.8510);">EMERGENCY OFF</div>
<div class="a t" style="top:596.69px;font-size:12.5px;line-height:12.5px;font-weight:bold;color:#ff0000;left:1750.63px;transform:translateX(-50%) scaleX(0.9124);">SERVOMOTOR</div>
<div class="a" style="left:1676px;top:630px;width:176px;height:148px;border-radius:50%;background:#ffff26;border:1px solid #000;box-shadow:inset 1.5px 1.5px 0 #ff8080,inset -1.6px -1.6px 0 #800000"></div>
<div class="a t" style="top:698.13px;font-size:13px;line-height:13px;font-weight:bold;color:#000;left:1763.62px;transform:translateX(-50%) scaleX(0.8789);">Emergency Released</div>
<div class="a" style="left:1680px;top:805px;width:170px;height:56px;border:1px solid #444;background:linear-gradient(180deg,#d8d8d8 0,#d2d2d2 6%,#c9c9c9 13%,#cbcbcb 30%,#bebebe 58%,#b3b3b3 78%,#b5b5b5 88%,#949494 95%,#6c6c6c 100%);box-shadow:inset 6px 0 4px -3px #dcdcdc,inset -6px 0 4px -3px #8c8c8c"></div>
<div class="a t" style="top:827.53px;font-size:13px;line-height:13px;font-weight:bold;color:#ff0000;left:1764.27px;transform:translateX(-50%) scaleX(0.9416);">Quit&gt;&gt;</div>
<div class="a" style="left:1722px;top:869px;width:80px;height:73px;background:#fff"></div>
<svg class="a" style="left:1722px;top:869px" width="80" height="73" viewBox="0 0 80 73">
<ellipse cx="40" cy="36.6" rx="38.6" ry="35.2" fill="#fff" stroke="#1d5d6c" stroke-width="1.4"/>
<ellipse cx="40" cy="36.6" rx="37" ry="33.6" fill="none" stroke="#a9c6cf" stroke-width="0.9"/>
<g font-family="Liberation Serif, serif" font-weight="bold" font-size="62" fill="#0b6fc9" stroke="#0b6fc9" stroke-width="1.2">
<text x="12.5" y="55" textLength="22" lengthAdjust="spacingAndGlyphs">S</text>
<text x="38" y="54" textLength="28" lengthAdjust="spacingAndGlyphs">P</text></g>
</svg>
<div class="a t" style="top:950.03px;font-size:13px;line-height:13px;font-weight:bold;color:#3b8fe8;left:1762.96px;transform:translateX(-50%) scaleX(0.8560);">SPRANKTRONICS</div>
<div class="a t" style="top:965.13px;font-size:13px;line-height:13px;font-weight:bold;color:#3b8fe8;left:1763.23px;transform:translateX(-50%) scaleX(0.8675);">BENGALURU</div>
<div class="a t" style="top:980.33px;font-size:13px;line-height:13px;font-weight:bold;color:#3b8fe8;left:1763.03px;transform:translateX(-50%) scaleX(0.9547);">INDIA</div>
<div class="a t" style="top:958.39px;font-size:21px;line-height:21px;font-weight:bold;color:#000080;left:1099.69px;transform-origin:0 50%;transform:scaleX(0.9449);">SCC Testing Machine Data Acquisition &amp; Controls</div>
<div class="a" style="left:0px;top:1040px;width:1920px;height:40px;background:linear-gradient(90deg,#d2e8f1 0%,#d3e4f0 50%,#d7dcec 100%)"></div>
<svg class="a" style="left:16px;top:1052px" width="17" height="17" viewBox="0 0 17 17" fill="#000"><path d="M0 2.4L7 1.4V8H0ZM8 1.25L17 0V8H8ZM0 9H7V15.6L0 14.6ZM8 9H17V17L8 15.75Z"/></svg>
<div class="a" style="left:48px;top:1041px;width:343px;height:39px;background:#fff;border-left:1px solid #c6c9cc;"></div>
<svg class="a" style="left:59px;top:1050px" width="20" height="20" viewBox="0 0 20 20" fill="none" stroke="#000" stroke-width="1.4"><circle cx="12" cy="7.5" r="5.3"/><path d="M8.2 11.5L1.5 18.2"/></svg>
<div class="a t" style="top:1052.92px;font-size:15px;line-height:15px;font-weight:normal;color:#222;left:87.86px;transform-origin:0 50%;transform:scaleX(0.9673);">Type here to search</div>
<div class="a" style="left:408px;top:1052px;width:16px;height:16px;border-radius:50%;border:2.4px solid #000"></div>
<svg class="a" style="left:455px;top:1051px" width="18" height="18" viewBox="0 0 18 18" fill="none" stroke="#000" stroke-width="1.2"><rect x="1.7" y="5.7" width="10" height="5.5"/><path d="M1.7 1.2V2.8H11.7V1.2M1.7 15.8V14.1H11.7V15.8"/><rect x="14.6" y="5.2" width="2.3" height="2.5" fill="#000" stroke="none"/><rect x="15.2" y="9" width="1.1" height="7.2" fill="#000" stroke="none"/><rect x="15.2" y="1" width="1.1" height="2.4" fill="#000" stroke="none"/></svg>
<svg class="a" style="left:502.4px;top:1047.6px" width="25" height="25" viewBox="0 0 27 27"><defs><linearGradient id="eg1" x1="0" y1="0" x2="1" y2="1"><stop offset="0" stop-color="#35c1f1"/><stop offset="1" stop-color="#0d5fb8"/></linearGradient><linearGradient id="eg2" x1="0" y1="0" x2="1" y2="0"><stop offset="0" stop-color="#34c6ee"/><stop offset="1" stop-color="#7bd94c"/></linearGradient></defs>
<circle cx="13.5" cy="13.5" r="12.5" fill="url(#eg1)"/>
<path d="M3 20.5C6 26.5 14.5 27.5 20.5 23.5C23.5 21.5 25.2 19.5 26 17C23 19.2 18.5 19.8 15 18.2C11.5 16.6 10 13.5 10.8 10.5C6 11.5 1.5 15 3 20.5Z" fill="#0d58b0"/>
<path d="M1.1 12.5C2 5.5 7.5 1 13.5 1C20.5 1 26 6.5 26 13C26 15.8 24.6 17.4 22 17.8C19 18.2 17.2 17 17.2 15.6C17.2 14.9 17.8 14.3 17.8 13.2C17.8 10.8 15 8.6 11.6 8.6C6.6 8.6 2.6 11 1.1 12.5Z" fill="url(#eg2)"/>
<path d="M14 10.8C12 10.8 10.7 12.4 10.8 14.2C10.9 16.6 13 18 15.6 18.2C19.4 18.6 23.4 18.6 25.8 16.6C22.6 17.6 19 17 17.6 15.4C16.9 14.6 17.3 13.2 16.9 12.3C16.5 11.3 15.4 10.8 14 10.8Z" fill="#d8ebf4"/>
</svg>
<svg class="a" style="left:552.4px;top:1050.2px" width="22.2" height="19.4" viewBox="0 0 24 22" preserveAspectRatio="none"><path d="M0.5 2.5Q0.5 1 2 1H8.5L10.5 3.5H22Q23.5 3.5 23.5 5V7H0.5Z" fill="#e8a820"/><rect x="0.5" y="5" width="23" height="15.5" rx="1" fill="#fdd65a"/><path d="M0.5 20.5H23.5V12L20 8.5H0.5Z" fill="#fbc63a" opacity=".55"/><path d="M5.5 20.5V12.5H18.5V20.5H15V15.5H9V20.5Z" fill="#2b8ce6"/></svg>
<div class="a" style="left:544px;top:1078px;width:40px;height:2px;background:#0a64c8"></div>
<svg class="a" style="left:600px;top:1047px" width="26" height="25" viewBox="0 0 26 25"><rect x="1" y="8.6" width="24" height="15.2" fill="#2aa6ec"/><polygon points="1,8.6 13,1.4 25,8.6" fill="#0b5ab4"/><polygon points="3.6,9 22.4,9 13,16.2" fill="#f6f4f4"/><polygon points="1,8.6 13,16.6 1,23.8" fill="#2bb0f0"/><polygon points="25,8.6 13,16.6 25,23.8" fill="#2196e2"/><polygon points="1,23.8 13,15.6 25,23.8" fill="#1b86d6"/><polygon points="1,23.8 13,15.6 13,23.8" fill="#25a2ea"/></svg>
<svg class="a" style="left:648px;top:1046px" width="28" height="27" viewBox="0 0 28 27"><path d="M12.5 5.8C6 5.6 1.6 9.6 1.8 14.6C2 19.4 5.6 22.6 9.6 22.6C12.4 22.6 12 20.2 13.6 19.2C16 17.8 20.2 19.4 22.6 15.6C25 11.6 20.6 6 12.5 5.8Z" fill="#bcdcf0" stroke="#5c9cd2" stroke-width="1"/><path d="M13 7.5C8 7.4 4 10.5 4 14" fill="none" stroke="#e6f2fa" stroke-width="1.2"/><circle cx="6.2" cy="14.4" r="1.9" fill="#e0443c"/><circle cx="9.8" cy="10.4" r="1.9" fill="#4cb84a"/><circle cx="14.6" cy="8.8" r="1.9" fill="#f0a424"/><circle cx="11.6" cy="16.6" r="1.7" fill="#d8eaf6" stroke="#86b4d8" stroke-width=".8"/><path d="M22.6 6.2L24.4 7.2L14.8 24.2L12.6 25.6L13.2 23Z" fill="#e8892c"/><path d="M22.4 6.4L23.6 2.4L26 3L25.4 4.6L24.6 7.4Z" fill="#c9a06c"/></svg>
<div class="a" style="left:642px;top:1078px;width:40px;height:2px;background:#0a64c8"></div>
<div class="a" style="left:687px;top:1040px;width:47px;height:40px;background:#eef3f8"></div>
<div class="a" style="left:687px;top:1078px;width:47px;height:2px;background:#0a64c8"></div>
<svg class="a" style="left:699px;top:1048px" width="23" height="22" viewBox="0 0 23 22"><rect x="0.5" y="0.5" width="22" height="21" fill="#fff" stroke="#1e50c8"/><rect x="1" y="1" width="21" height="2.5" fill="#2060d8"/><rect x="3" y="5.5" width="17" height="12" fill="#222"/><path d="M4 7.5H19M4 10H19M4 12.5H19M4 15H19" stroke="#4a8a4a" stroke-width=".8"/><path d="M6 6V17M10 6V17M14 6V17M18 6V17" stroke="#b03030" stroke-width=".6"/><polygon points="7.5,7 16.5,11.5 7.5,16" fill="#f8e800"/><rect x="3" y="18.5" width="17" height="1.5" fill="#777"/></svg>
<svg class="a" style="left:1578.4px;top:1056px" width="13" height="8" viewBox="0 0 13 8" fill="none" stroke="#000" stroke-width="1.3"><path d="M0.8 7.2L6.5 1.4L12.2 7.2"/></svg>
<svg class="a" style="left:1611px;top:1051.4px" width="13" height="17" viewBox="0 0 13 17" fill="none" stroke="#000" stroke-width="1.25"><rect x="1" y="5" width="7" height="7" rx="1.6"/><path d="M8.5 7.5L11.5 6V11L8.5 9.5M2.5 2.5Q5 0.3 8.5 2.5M2.5 14.5Q5 16.7 8.5 14.5"/></svg>
<svg class="a" style="left:1642.8px;top:1051.8px" width="12.2" height="16" viewBox="0 0 12 16"><rect x="0" y="0" width="12" height="16" rx="5.6" fill="#0a84ff"/><path d="M3 5L8.6 10.6L6 13.2V2.8L8.6 5.4L3 11" fill="none" stroke="#fff" stroke-width="1.1"/></svg>
<div class="a" style="left:1673px;top:1052px;width:16px;height:15.6px;background:#3a9e3a;border-radius:1.5px"></div>
<div class="a t" style="top:1053.23px;font-size:14px;line-height:14px;font-weight:bold;color:#fff;left:1680.95px;transform:translateX(-50%) scaleX(1.0000);font-family:&quot;Liberation Serif&quot;,serif;">Q</div>
<svg class="a" style="left:1706px;top:1053px" width="16" height="15" viewBox="0 0 16 15" fill="none" stroke="#1a1a1a" stroke-width="1.4"><path d="M1.6 13.2Q2.6 3.4 12.4 2M5 13.4Q5.8 7 12.4 5.8M8.4 13.6Q8.9 10.2 12.2 9.4"/><circle cx="12.4" cy="12.8" r="1.4" fill="#000" stroke="none"/></svg>
<svg class="a" style="left:1736.5px;top:1053px" width="17" height="14.5" viewBox="0 0 18 16" fill="none" stroke="#000" stroke-width="1.2"><path d="M1 5.5H3.5L7.5 1.5V14.5L3.5 10.5H1Z"/><path d="M10 5.5Q11.5 8 10 10.5M12.3 3.5Q15 8 12.3 12.5M14.8 1.8Q18.3 8 14.8 14.2"/></svg>
<div class="a t" style="top:1054.19px;font-size:12.5px;line-height:12.5px;font-weight:normal;color:#000;left:1767.06px;transform-origin:0 50%;transform:scaleX(0.8436);">ENG</div>
<div class="a t" style="top:1045.09px;font-size:12.5px;line-height:12.5px;font-weight:normal;color:#000;left:1831.70px;transform:translateX(-50%) scaleX(0.8571);">13:38</div>
<div class="a t" style="top:1062.89px;font-size:12.5px;line-height:12.5px;font-weight:normal;color:#000;left:1832.09px;transform:translateX(-50%) scaleX(0.8797);">04-06-2021</div>
<svg class="a" style="left:1878px;top:1051px" width="24" height="22" viewBox="0 0 24 22"><path d="M1 1H17V14H6.5L6.5 18L2.5 14H1Z" fill="#000"/><path d="M3.5 4.5H14.5M3.5 7.5H14.5M3.5 10.5H14.5" stroke="#fff" stroke-width="1.1"/><circle cx="16.5" cy="14.5" r="6.3" fill="#e6e6e6" stroke="#a8a8a8" stroke-width="1"/></svg>
<div class="a t" style="top:1059.74px;font-size:12px;line-height:12px;font-weight:normal;color:#000;left:1894.59px;transform:translateX(-50%) scaleX(1.0000);">2</div>
<div class="a" style="left:1915px;top:1040px;width:1px;height:40px;background:#9aa"></div>
</body></html>
